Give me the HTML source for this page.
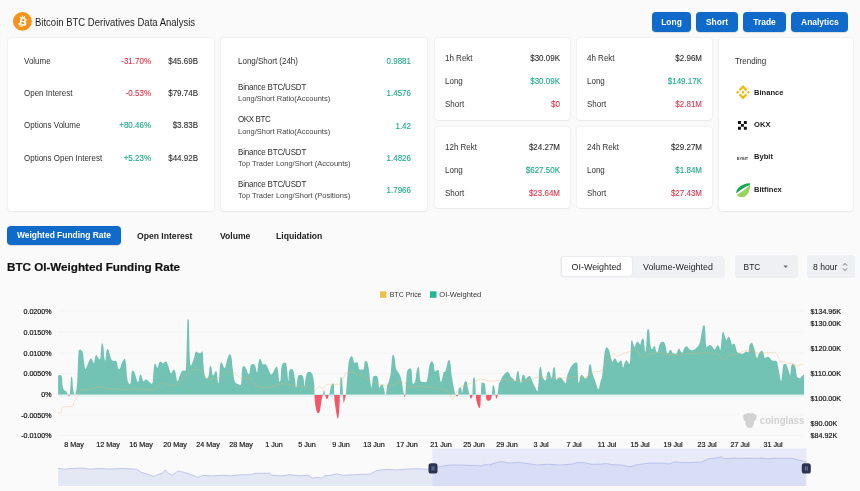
<!DOCTYPE html>
<html>
<head>
<meta charset="utf-8">
<title>Bitcoin BTC Derivatives Data Analysis</title>
<style>
*{box-sizing:border-box;margin:0;padding:0}
html,body{width:860px;height:491px;overflow:hidden;background:#fafafa;font-family:"Liberation Sans",sans-serif;color:#222}
#root{position:relative;width:860px;height:491px;overflow:hidden;will-change:transform;-webkit-font-smoothing:antialiased}
.abs{position:absolute;white-space:nowrap}
.card{position:absolute;background:#fff;border-radius:3px;box-shadow:0 0 2.5px rgba(0,0,0,0.10),0 1px 1.5px rgba(0,0,0,0.04)}
.t{position:absolute;white-space:nowrap;font-size:8.6px;line-height:10px;color:#303030;transform:scaleX(0.93);transform-origin:0 0;margin-top:-0.3px}
.r{text-align:right;transform-origin:100% 0;-webkit-text-stroke:0.12px currentColor}
.red{color:#e0364f}
.grn{color:#1fa88a}
.sub{font-size:8px;color:#444;transform:scaleX(0.9375)}
.bn{letter-spacing:-0.2px}
.tn{font-weight:bold;font-size:8.1px;color:#222;transform:scaleX(0.938)}
.btn{position:absolute;background:#0f6aca;color:#fff;font-weight:bold;font-size:8.45px;line-height:20px;height:20px;border-radius:4px;text-align:center;box-shadow:0 0.5px 1px rgba(0,0,0,0.12)}
.tab{position:absolute;font-weight:bold;font-size:8.6px;line-height:20px;color:#222;white-space:nowrap}
.ctl{font-size:8.4px;line-height:11px;color:#222}
</style>
</head>
<body>
<div id="root">

<!-- header -->
<svg class="abs" style="left:13.1px;top:12.4px" width="18.8" height="18.8" viewBox="0 0 32 32"><circle cx="16" cy="16" r="16" fill="#f7931a"/><path fill="#fff" d="M23.189 14.02c.314-2.096-1.283-3.223-3.465-3.975l.708-2.84-1.728-.43-.69 2.765c-.454-.114-.92-.22-1.385-.326l.695-2.783L15.596 6l-.708 2.839c-.376-.086-.746-.17-1.104-.26l.002-.009-2.384-.595-.46 1.846s1.283.294 1.256.312c.7.175.826.638.805 1.006l-.806 3.235c.048.012.11.03.18.057l-.183-.045-1.13 4.532c-.086.212-.303.531-.793.41.018.025-1.256-.313-1.256-.313l-.858 1.978 2.25.561c.418.105.828.215 1.231.318l-.715 2.872 1.727.43.708-2.84c.472.127.93.245 1.378.357l-.706 2.828 1.728.43.715-2.866c2.948.558 5.164.333 6.097-2.333.752-2.146-.037-3.385-1.588-4.192 1.13-.26 1.98-1.003 2.207-2.538zm-3.95 5.538c-.533 2.147-4.148.986-5.32.695l.95-3.805c1.172.293 4.929.872 4.37 3.11zm.535-5.569c-.487 1.953-3.495.96-4.47.717l.86-3.45c.975.243 4.118.696 3.61 2.733z"/></svg>
<div class="abs" id="title" style="left:35px;top:16.6px;font-size:10.4px;line-height:12px;color:#1e1e1e;transform:scaleX(0.915);transform-origin:0 0">Bitcoin BTC Derivatives Data Analysis</div>

<div class="btn" style="left:652px;top:12px;width:39px">Long</div>
<div class="btn" style="left:696px;top:12px;width:42px">Short</div>
<div class="btn" style="left:743px;top:12px;width:43px">Trade</div>
<div class="btn" style="left:791.2px;top:12px;width:57.3px">Analytics</div>

<!-- card 1 -->
<div class="card" style="left:8px;top:37.5px;width:206px;height:173.5px"></div>
<div class="t" style="left:24px;top:56px">Volume</div>
<div class="t r red" style="left:100px;width:51px;top:56px">-31.70%</div>
<div class="t r" style="left:149.5px;width:48px;top:56px">$45.69B</div>
<div class="t" style="left:24px;top:88.5px">Open Interest</div>
<div class="t r red" style="left:100px;width:51px;top:88.5px">-0.53%</div>
<div class="t r" style="left:149.5px;width:48px;top:88.5px">$79.74B</div>
<div class="t" style="left:24px;top:120.5px">Options Volume</div>
<div class="t r grn" style="left:100px;width:51px;top:120.5px">+80.46%</div>
<div class="t r" style="left:149.5px;width:48px;top:120.5px">$3.83B</div>
<div class="t" style="left:24px;top:153px">Options Open Interest</div>
<div class="t r grn" style="left:100px;width:51px;top:153px">+5.23%</div>
<div class="t r" style="left:149.5px;width:48px;top:153px">$44.92B</div>

<!-- card 2 -->
<div class="card" style="left:221px;top:37.5px;width:206.3px;height:173.5px"></div>
<div class="t" style="left:237.5px;top:56px">Long/Short (24h)</div>
<div class="t r grn" style="left:360px;width:51px;top:56px">0.9881</div>
<div class="t bn" style="left:237.5px;top:82px">Binance BTC/USDT</div>
<div class="t sub" style="left:237.5px;top:94.7px">Long/Short Ratio(Accounts)</div>
<div class="t r grn" style="left:360px;width:51px;top:88.7px">1.4576</div>
<div class="t bn" style="left:237.5px;top:114.7px;letter-spacing:-0.4px">OKX BTC</div>
<div class="t sub" style="left:237.5px;top:127.5px">Long/Short Ratio(Accounts)</div>
<div class="t r grn" style="left:360px;width:51px;top:121px">1.42</div>
<div class="t bn" style="left:237.5px;top:147px">Binance BTC/USDT</div>
<div class="t sub" style="left:237.5px;top:159.7px">Top Trader Long/Short (Accounts)</div>
<div class="t r grn" style="left:360px;width:51px;top:153.7px">1.4826</div>
<div class="t bn" style="left:237.5px;top:179.5px">Binance BTC/USDT</div>
<div class="t sub" style="left:237.5px;top:191.7px">Top Trader Long/Short (Positions)</div>
<div class="t r grn" style="left:360px;width:51px;top:185.7px">1.7966</div>

<!-- rekt cards -->
<div class="card" style="left:435px;top:38px;width:135px;height:81.5px"></div>
<div class="t" style="left:445px;top:53px">1h Rekt</div><div class="t r" style="left:500px;width:60px;top:53px">$30.09K</div>
<div class="t" style="left:445px;top:76px">Long</div><div class="t r grn" style="left:500px;width:60px;top:76px">$30.09K</div>
<div class="t" style="left:445px;top:99px">Short</div><div class="t r red" style="left:500px;width:60px;top:99px">$0</div>

<div class="card" style="left:435px;top:127px;width:135px;height:81px"></div>
<div class="t" style="left:445px;top:142px">12h Rekt</div><div class="t r" style="left:500px;width:60px;top:142px">$24.27M</div>
<div class="t" style="left:445px;top:165px">Long</div><div class="t r grn" style="left:500px;width:60px;top:165px">$627.50K</div>
<div class="t" style="left:445px;top:188px">Short</div><div class="t r red" style="left:500px;width:60px;top:188px">$23.64M</div>

<div class="card" style="left:577px;top:38px;width:135px;height:81.5px"></div>
<div class="t" style="left:587px;top:53px">4h Rekt</div><div class="t r" style="left:642px;width:60px;top:53px">$2.96M</div>
<div class="t" style="left:587px;top:76px">Long</div><div class="t r grn" style="left:642px;width:60px;top:76px">$149.17K</div>
<div class="t" style="left:587px;top:99px">Short</div><div class="t r red" style="left:642px;width:60px;top:99px">$2.81M</div>

<div class="card" style="left:577px;top:127px;width:135px;height:81px"></div>
<div class="t" style="left:587px;top:142px">24h Rekt</div><div class="t r" style="left:642px;width:60px;top:142px">$29.27M</div>
<div class="t" style="left:587px;top:165px">Long</div><div class="t r grn" style="left:642px;width:60px;top:165px">$1.84M</div>
<div class="t" style="left:587px;top:188px">Short</div><div class="t r red" style="left:642px;width:60px;top:188px">$27.43M</div>

<!-- trending -->
<div class="card" style="left:719px;top:37.5px;width:134px;height:173.5px"></div>
<div class="t" style="left:735px;top:56px">Trending</div>
<div class="t tn" style="left:753.9px;top:88.6px">Binance</div>
<div class="t tn" style="left:753.9px;top:120.6px">OKX</div>
<div class="t tn" style="left:753.9px;top:152.7px">Bybit</div>
<div class="t tn" style="left:753.9px;top:185.4px">Bitfinex</div>
<svg class="abs" style="left:735.8px;top:85.4px" width="14" height="14.6" viewBox="0 0 126.61 126.61" preserveAspectRatio="none"><path fill="#f0b90b" d="M38.73 53.2l24.59-24.58 24.6 24.6 14.3-14.31L63.32 0 24.42 38.9zM0 63.31l14.3-14.31 14.31 14.31-14.31 14.3zM38.73 73.41l24.59 24.59 24.6-24.6 14.31 14.29-38.9 38.91-38.91-38.88zM98 63.31l14.3-14.31 14.31 14.3-14.31 14.32zM77.83 63.3L63.32 48.78 52.59 59.51l-1.24 1.23-2.54 2.54 14.51 14.5 14.51-14.47z"/></svg>
<svg class="abs" style="left:738.4px;top:121px" width="8.8" height="8.8" viewBox="0 0 3 3"><path fill="#111" d="M0 0h1v1h-1zM2 0h1v1h-1zM1 1h1v1h-1zM0 2h1v1h-1zM2 2h1v1h-1z"/></svg>
<svg class="abs" style="left:736px;top:154px" width="13" height="8" viewBox="0 0 13 8"><text x="0.7" y="5.9" font-family="Liberation Sans, sans-serif" font-weight="bold" font-size="4.4" fill="#444" textLength="11.5" lengthAdjust="spacingAndGlyphs">BYBIT</text></svg>
<svg class="abs" style="left:735.8px;top:182.6px" width="14.4" height="14.6" viewBox="0 0 153 155"><path fill="#16a84f" d="M3 100 C8 55 55 8 150 3 C150 10 148 18 146 22 C100 40 45 75 6 108 C3 106 3 103 3 100z"/><path fill="#97d45c" d="M8 128 C50 100 105 70 150 18 C152 60 140 110 100 140 C70 158 25 150 8 128z"/></svg>

<!-- tabs -->
<div class="btn" style="left:7px;top:226px;width:114px;height:19.3px;line-height:19.3px">Weighted Funding Rate</div>
<div class="tab" style="left:137px;top:226px">Open Interest</div>
<div class="tab" style="left:220px;top:226px">Volume</div>
<div class="tab" style="left:276px;top:226px">Liquidation</div>

<div class="abs" id="h2" style="left:7px;top:259.7px;font-size:11.65px;line-height:14px;font-weight:bold;color:#111;-webkit-text-stroke:0.2px #111">BTC OI-Weighted Funding Rate</div>

<!--CHART-->
<svg class="abs" style="left:0;top:0" width="860" height="491" viewBox="0 0 860 491" font-family="Liberation Sans, sans-serif">
<defs><clipPath id="up"><rect x="0" y="300" width="860" height="94.8"/></clipPath><clipPath id="dn"><rect x="0" y="395.00" width="860" height="60"/></clipPath><clipPath id="sel"><rect x="432.2" y="448" width="374.1" height="38"/></clipPath><clipPath id="unsel"><rect x="58" y="448" width="374.2" height="38"/></clipPath></defs>
<line x1="58" x2="804" y1="311.0" y2="311.0" stroke="#f4f4f4" stroke-width="1"/>
<line x1="58" x2="804" y1="332.0" y2="332.0" stroke="#f4f4f4" stroke-width="1"/>
<line x1="58" x2="804" y1="353.0" y2="353.0" stroke="#f4f4f4" stroke-width="1"/>
<line x1="58" x2="804" y1="373.5" y2="373.5" stroke="#f4f4f4" stroke-width="1"/>
<line x1="58" x2="804" y1="394.5" y2="394.5" stroke="#f4f4f4" stroke-width="1"/>
<line x1="58" x2="804" y1="415.0" y2="415.0" stroke="#f4f4f4" stroke-width="1"/>
<line x1="58" x2="804" y1="435.5" y2="435.5" stroke="#f4f4f4" stroke-width="1"/>
<rect x="380" y="291.3" width="6.5" height="6.5" fill="#e9c04c"/><text x="389.8" y="297.3" font-size="7.6" fill="#333" textLength="31.7" lengthAdjust="spacingAndGlyphs">BTC Price</text>
<rect x="430" y="291.3" width="6.5" height="6.5" fill="#22b88f"/><text x="439.3" y="297.3" font-size="7.6" fill="#333" textLength="42" lengthAdjust="spacingAndGlyphs">OI-Weighted</text>
<line x1="58" x2="804" y1="396" y2="396" stroke="#e6f6f5" stroke-width="2"/>
<path d="M58.1 394.8 L58.1 375.4 C58.7 375.5 60.7 374.1 61.6 376.0 C62.4 377.8 62.2 383.1 62.6 385.6 C63.1 388.1 63.4 389.0 64.0 390.0 C64.6 391.0 65.5 390.6 66.1 391.2 C66.8 391.8 67.1 392.9 67.5 393.5 C67.9 394.1 68.0 394.2 68.2 394.7 C68.5 395.2 68.7 396.5 68.9 396.5 C69.2 396.5 69.4 396.0 69.6 394.7 C69.9 393.4 70.1 392.2 70.3 389.1 C70.6 386.0 70.7 379.7 71.0 377.7 C71.4 375.8 71.9 376.2 72.3 378.2 C72.6 380.3 72.8 386.2 73.1 389.1 C73.5 392.0 73.7 393.5 74.2 394.4 C74.6 395.2 75.0 396.2 75.6 394.0 C76.1 391.8 76.7 389.3 77.2 382.1 C77.7 374.9 77.9 359.9 78.4 354.1 C78.9 348.2 79.2 350.3 79.8 349.7 C80.4 349.0 81.0 349.9 81.5 350.6 C82.1 351.2 82.5 351.0 82.9 353.2 C83.4 355.4 83.7 360.0 84.2 362.8 C84.6 365.7 84.8 368.6 85.4 369.0 C86.0 369.3 86.9 366.3 87.7 364.6 C88.5 362.8 89.2 360.3 90.0 359.3 C90.7 358.3 91.1 358.5 91.7 359.0 C92.3 359.4 92.7 361.2 93.1 361.9 C93.5 362.6 93.8 363.8 94.2 362.8 C94.5 361.9 94.8 358.1 95.2 356.7 C95.6 355.3 96.0 354.9 96.4 354.9 C96.9 354.9 97.2 355.9 97.7 356.7 C98.1 357.5 98.6 359.2 99.1 359.3 C99.6 359.5 100.1 359.8 100.5 357.6 C100.8 355.4 100.9 349.6 101.2 347.0 C101.5 344.5 101.8 343.2 102.2 343.2 C102.6 343.2 103.1 344.5 103.4 347.0 C103.8 349.6 104.0 355.2 104.3 357.6 C104.7 359.9 105.0 361.3 105.4 360.2 C105.8 359.1 106.0 353.4 106.4 351.4 C106.9 349.4 107.3 349.0 107.8 349.1 C108.3 349.3 108.7 350.6 109.2 352.3 C109.8 354.0 110.3 356.9 111.0 358.4 C111.7 360.0 112.1 360.2 113.1 360.7 C114.1 361.3 115.7 360.1 116.6 361.4 C117.5 362.7 117.4 366.7 118.0 368.1 C118.6 369.4 119.1 369.7 119.7 369.0 C120.4 368.2 120.9 365.3 121.5 363.7 C122.1 362.1 122.6 361.0 123.2 360.2 C123.9 359.3 124.5 358.2 125.0 359.0 C125.5 359.8 125.7 361.2 126.1 364.6 C126.4 367.9 126.6 374.3 127.1 377.7 C127.6 381.1 128.2 382.5 128.9 383.5 C129.5 384.4 130.1 385.0 130.6 383.0 C131.1 381.0 131.2 374.7 131.7 372.5 C132.1 370.2 132.5 370.5 133.1 370.7 C133.6 370.9 134.1 371.6 134.8 373.3 C135.5 375.1 136.3 378.8 136.9 380.3 C137.5 381.9 137.9 382.7 138.3 382.1 C138.8 381.5 138.9 378.3 139.4 376.8 C139.8 375.4 140.3 374.2 140.8 374.2 C141.2 374.2 141.4 375.6 141.8 376.8 C142.3 378.1 142.6 380.7 143.2 381.2 C143.9 381.7 144.8 379.7 145.5 379.5 C146.2 379.2 146.5 379.5 147.3 380.0 C148.0 380.5 148.9 381.9 149.9 382.4 C150.8 383.0 151.9 384.6 152.5 383.0 C153.1 381.3 153.0 376.7 153.4 373.3 C153.7 370.0 154.0 365.8 154.4 364.2 C154.9 362.6 155.3 363.9 155.8 364.6 C156.3 365.3 156.7 368.1 157.2 368.1 C157.7 368.1 158.1 365.7 158.6 364.6 C159.1 363.4 159.5 362.1 160.0 361.6 C160.6 361.1 160.9 361.7 161.4 361.9 C162.0 362.2 162.4 363.2 163.0 363.2 C163.6 363.2 164.2 362.2 164.8 361.9 C165.4 361.7 165.8 361.1 166.4 361.6 C166.9 362.1 167.3 363.2 167.8 364.6 C168.3 365.9 168.6 367.4 169.2 369.0 C169.7 370.5 170.3 373.0 170.9 373.3 C171.5 373.6 172.1 371.4 172.7 370.7 C173.2 370.0 173.6 369.2 174.1 369.5 C174.6 369.8 175.0 370.5 175.5 372.5 C176.0 374.4 176.4 378.9 176.9 380.3 C177.4 381.8 177.8 381.1 178.3 380.3 C178.8 379.6 179.0 377.5 179.7 376.0 C180.3 374.4 181.0 372.6 181.8 371.6 C182.5 370.5 183.2 370.7 183.9 370.2 C184.6 369.7 185.3 373.1 185.8 369.0 C186.3 364.8 186.4 355.4 186.7 347.0 C187.0 338.7 187.1 327.4 187.4 322.5 C187.6 317.6 187.8 319.9 188.1 319.9 C188.4 319.9 188.7 316.0 189.0 322.5 C189.2 329.0 189.3 348.1 189.7 355.8 C190.0 363.5 190.2 364.2 190.7 365.4 C191.2 366.7 191.8 363.9 192.3 362.8 C192.8 361.7 193.2 361.0 193.7 359.3 C194.2 357.6 194.6 354.6 195.1 353.2 C195.6 351.8 196.0 351.5 196.5 351.4 C197.0 351.3 197.4 352.3 198.1 352.7 C198.7 353.0 199.4 353.2 200.0 353.2 C200.6 353.1 200.9 352.4 201.4 352.3 C201.9 352.2 202.4 349.5 202.8 352.7 C203.2 355.8 203.4 365.5 203.9 369.8 C204.3 374.2 204.7 375.3 205.3 376.8 C205.8 378.4 206.4 378.9 207.0 378.6 C207.6 378.3 208.3 377.1 208.8 375.1 C209.2 373.0 209.3 368.8 209.6 367.2 C210.0 365.6 210.2 365.8 210.5 366.0 C210.9 366.1 211.2 366.4 211.6 368.1 C211.9 369.7 212.2 374.0 212.6 375.1 C213.1 376.2 213.5 374.8 214.0 374.2 C214.5 373.6 214.9 371.9 215.4 371.6 C215.9 371.3 216.4 370.6 216.8 372.5 C217.3 374.3 217.5 380.5 217.9 382.1 C218.3 383.7 218.5 384.4 218.9 381.2 C219.3 378.1 219.7 367.9 220.2 364.6 C220.6 361.2 220.9 362.5 221.4 362.5 C221.9 362.5 222.3 363.6 222.8 364.6 C223.3 365.6 223.7 367.8 224.2 368.1 C224.7 368.4 225.0 367.9 225.6 366.3 C226.1 364.7 226.6 361.4 227.2 359.3 C227.8 357.3 228.4 355.8 228.9 354.9 C229.4 354.0 229.7 353.9 230.1 354.4 C230.6 354.9 231.1 355.1 231.5 357.6 C232.0 360.0 232.1 364.1 232.6 368.1 C233.1 372.0 233.6 376.8 234.2 379.5 C234.8 382.1 235.1 382.1 235.9 383.0 C236.7 383.8 237.6 384.0 238.6 384.2 C239.5 384.4 240.5 386.4 241.2 383.8 C241.8 381.3 241.6 373.0 242.1 369.8 C242.5 366.6 243.0 366.5 243.5 366.0 C244.0 365.4 244.3 366.0 244.9 366.7 C245.4 367.4 246.0 368.5 246.6 369.8 C247.2 371.2 247.8 373.7 248.4 374.2 C248.9 374.7 249.4 373.9 249.8 372.5 C250.1 371.0 250.1 367.5 250.5 366.0 C250.8 364.5 251.3 364.5 251.9 364.2 C252.4 363.9 253.0 363.8 253.6 364.2 C254.3 364.6 254.7 364.8 255.4 366.3 C256.0 367.8 256.6 372.8 257.1 372.5 C257.6 372.1 257.8 366.9 258.2 364.6 C258.6 362.3 258.8 360.7 259.2 359.7 C259.7 358.7 260.1 358.4 260.6 359.0 C261.1 359.5 261.5 361.8 262.0 362.8 C262.5 363.8 262.8 364.3 263.4 364.6 C264.1 364.8 264.8 363.7 265.5 364.2 C266.3 364.7 266.8 365.6 267.6 367.2 C268.5 368.8 269.3 372.1 270.1 373.3 C270.9 374.6 271.2 374.5 271.8 374.2 C272.5 373.9 273.0 372.7 273.6 371.6 C274.2 370.4 274.7 368.5 275.4 367.7 C276.0 366.9 276.6 366.5 277.1 367.2 C277.6 367.9 277.8 369.1 278.2 371.6 C278.5 374.1 278.8 379.8 279.2 381.2 C279.6 382.6 280.2 381.8 280.6 379.5 C281.0 377.1 280.9 370.9 281.3 368.1 C281.7 365.2 282.1 364.6 282.7 363.7 C283.3 362.7 283.8 362.8 284.5 362.8 C285.1 362.8 285.7 362.1 286.2 363.7 C286.7 365.3 286.9 368.4 287.3 371.6 C287.6 374.7 288.0 381.1 288.3 381.2 C288.6 381.4 288.7 374.6 289.0 372.5 C289.3 370.3 289.6 370.1 290.1 369.5 C290.6 368.9 291.2 368.7 291.8 369.1 C292.5 369.5 293.0 369.7 293.6 371.6 C294.1 373.4 294.5 376.6 295.0 379.5 C295.4 382.4 295.6 387.2 296.0 387.7 C296.4 388.2 296.7 384.2 297.1 382.1 C297.5 380.0 297.6 377.2 298.1 376.0 C298.6 374.7 299.1 375.2 299.9 375.1 C300.6 375.0 301.6 374.6 302.3 375.4 C303.0 376.2 303.4 377.5 303.7 379.5 C304.1 381.5 304.1 386.5 304.4 386.5 C304.8 386.5 305.0 381.8 305.5 379.5 C305.9 377.1 306.3 374.7 306.9 373.3 C307.5 372.0 308.2 372.3 309.0 372.1 C309.8 371.9 310.4 371.8 311.1 372.5 C311.8 373.1 312.3 373.6 312.9 376.0 C313.4 378.3 314.0 382.2 314.3 385.6 C314.5 389.0 314.4 392.0 314.5 394.8 C314.6 397.6 314.7 399.1 314.9 401.3 C315.1 403.5 315.3 405.2 315.6 407.0 C316.0 408.8 316.3 410.2 316.6 411.2 C317.0 412.3 317.2 412.4 317.5 412.8 C317.8 413.2 318.0 413.3 318.3 413.3 C318.6 413.2 318.9 413.2 319.2 412.5 C319.6 411.9 319.8 411.5 320.2 409.4 C320.6 407.4 321.0 403.5 321.4 401.3 C321.7 399.1 321.9 398.4 322.2 397.2 C322.4 396.1 322.6 395.8 322.8 394.8 C323.1 393.8 323.2 392.4 323.5 391.5 C323.7 390.6 323.8 389.8 324.0 389.9 C324.2 390.0 324.4 391.0 324.6 391.9 C324.8 392.8 324.8 393.7 325.1 394.8 C325.4 395.9 325.8 397.3 326.1 398.0 C326.4 398.8 326.6 399.0 326.9 399.0 C327.2 399.0 327.5 398.8 327.9 398.0 C328.2 397.3 328.4 395.4 328.7 394.8 C328.9 394.2 329.0 396.0 329.3 394.7 C329.7 393.4 330.2 389.3 330.7 387.4 C331.3 385.4 331.9 384.3 332.5 383.8 C333.0 383.4 333.6 382.8 333.9 384.7 C334.2 386.7 334.1 391.7 334.2 394.7 C334.4 397.7 334.3 398.1 334.6 401.3 C335.0 404.5 335.7 409.6 336.3 412.7 C336.8 415.8 337.3 417.7 337.6 418.4 C338.0 419.1 338.1 419.1 338.5 416.8 C338.8 414.4 339.3 409.3 339.5 405.4 C339.8 401.4 339.7 399.6 339.9 394.8 C340.1 390.0 340.2 381.7 340.5 378.6 C340.8 375.5 341.3 377.1 341.6 377.7 C341.9 378.3 342.0 379.0 342.3 382.1 C342.5 385.2 342.8 391.0 343.0 394.7 C343.2 398.4 343.3 401.9 343.6 402.8 C343.9 403.7 344.3 401.1 344.7 399.7 C345.1 398.2 345.3 398.6 345.8 394.8 C346.3 391.0 346.7 384.3 347.2 378.6 C347.7 372.8 348.1 366.5 348.6 362.8 C349.1 359.1 349.5 359.1 350.0 357.9 C350.5 356.7 350.9 356.2 351.4 356.2 C351.9 356.1 352.3 356.4 352.8 357.6 C353.3 358.8 353.6 361.9 354.2 362.8 C354.8 363.7 355.3 362.5 356.0 362.5 C356.6 362.5 357.1 361.7 357.7 362.8 C358.3 364.0 358.4 367.8 359.1 369.0 C359.8 370.1 360.7 369.5 361.6 369.5 C362.4 369.5 363.1 370.3 363.7 369.0 C364.2 367.6 364.3 363.4 364.7 361.9 C365.2 360.5 365.6 360.9 366.1 361.1 C366.6 361.2 367.0 361.2 367.5 362.8 C368.0 364.4 368.4 366.4 368.9 369.8 C369.4 373.3 369.8 378.9 370.3 382.1 C370.8 385.2 371.3 388.1 371.7 387.4 C372.2 386.6 372.3 379.7 372.8 377.7 C373.3 375.7 373.8 376.4 374.5 376.1 C375.2 375.9 376.0 375.7 376.6 376.1 C377.3 376.6 377.6 376.6 378.0 378.6 C378.5 380.6 378.6 386.2 379.1 387.4 C379.6 388.5 380.2 385.7 380.8 385.2 C381.5 384.8 382.0 384.0 382.6 384.7 C383.2 385.4 383.6 387.4 384.0 389.1 C384.4 390.8 384.7 393.4 385.0 394.4 C385.4 395.3 385.7 395.9 386.1 394.4 C386.5 392.8 386.6 388.0 387.1 385.6 C387.7 383.2 388.3 383.4 388.9 381.2 C389.5 379.0 390.1 377.6 390.7 373.3 C391.2 369.1 391.6 360.9 392.1 357.6 C392.6 354.2 393.0 354.9 393.5 354.9 C393.9 354.9 394.1 355.2 394.5 357.6 C395.0 359.9 395.3 365.6 395.9 368.1 C396.5 370.6 397.0 370.3 397.7 371.6 C398.4 372.8 399.1 373.5 399.8 375.1 C400.5 376.7 401.0 377.8 401.5 380.3 C402.1 382.9 402.5 386.5 402.9 389.1 C403.4 391.7 403.7 393.3 404.0 394.7 C404.3 396.2 404.4 397.2 404.7 397.2 C404.9 397.2 405.1 397.4 405.4 394.7 C405.6 392.0 405.8 386.3 406.1 382.1 C406.4 377.9 406.6 373.9 407.1 371.6 C407.6 369.2 408.2 369.5 408.9 369.0 C409.5 368.4 410.1 368.0 410.6 368.4 C411.1 368.9 411.4 369.1 411.7 371.6 C412.0 374.0 412.1 379.9 412.4 382.1 C412.7 384.3 412.9 384.0 413.4 383.8 C413.9 383.7 414.6 383.4 415.2 381.2 C415.8 379.0 416.1 374.1 416.6 371.6 C417.1 369.1 417.5 367.8 418.0 367.2 C418.4 366.6 418.7 365.9 419.0 368.1 C419.4 370.3 419.7 377.0 420.1 379.5 C420.5 381.9 420.9 381.3 421.5 381.7 C422.1 382.2 422.7 382.1 423.6 382.1 C424.5 382.1 425.6 382.7 426.4 381.7 C427.2 380.8 427.3 379.6 427.8 376.8 C428.3 374.1 428.6 369.0 429.2 366.3 C429.8 363.6 430.4 362.8 431.0 361.9 C431.5 361.1 431.9 360.9 432.4 361.4 C432.9 361.9 433.3 362.8 433.8 364.6 C434.2 366.3 434.2 370.2 434.8 371.2 C435.4 372.2 436.2 370.3 436.9 370.2 C437.6 370.1 438.2 369.5 438.7 370.7 C439.2 371.9 439.3 374.8 439.7 376.8 C440.1 378.9 440.3 381.8 440.8 382.1 C441.2 382.4 441.7 380.3 442.2 378.6 C442.7 376.9 443.0 373.7 443.6 372.5 C444.1 371.2 444.8 372.7 445.3 371.6 C445.9 370.5 446.2 368.2 446.7 366.3 C447.2 364.4 447.6 362.2 448.1 361.1 C448.6 360.0 449.1 359.6 449.5 360.2 C450.0 360.8 450.2 361.9 450.6 364.6 C451.0 367.3 451.1 371.3 451.6 375.1 C452.1 378.9 452.8 382.4 453.4 385.6 C454.0 388.8 454.4 391.0 454.8 392.6 C455.2 394.2 455.3 394.3 455.5 394.7 C455.7 395.1 455.7 394.5 455.9 394.8 C456.1 395.1 456.4 396.2 456.7 396.4 C457.0 396.6 457.3 396.3 457.5 396.0 C457.8 395.7 457.9 396.0 458.1 394.8 C458.3 393.5 458.3 390.4 458.6 389.1 C459.0 387.8 459.5 387.4 460.0 387.4 C460.6 387.4 461.1 388.1 461.4 389.1 C461.8 390.1 461.7 393.9 462.1 393.0 C462.6 392.0 463.3 386.0 463.9 383.8 C464.5 381.7 464.8 381.5 465.3 381.2 C465.8 380.9 466.2 380.7 466.7 382.1 C467.2 383.5 467.6 386.8 468.1 389.1 C468.6 391.4 469.2 393.7 469.5 394.7 C469.7 395.7 469.6 394.2 469.7 394.8 C469.9 395.4 470.1 397.3 470.3 398.0 C470.6 398.7 470.8 398.8 471.1 398.7 C471.4 398.5 471.7 397.9 471.9 397.2 C472.2 396.5 472.2 397.8 472.4 394.8 C472.6 391.7 472.7 383.5 473.0 380.3 C473.3 377.2 473.7 377.2 474.1 377.2 C474.4 377.2 474.8 377.2 475.1 380.3 C475.4 383.5 475.7 392.1 475.8 394.7 C475.9 397.3 475.8 393.9 475.9 394.8 C475.9 395.7 475.9 397.8 476.3 399.7 C476.6 401.6 477.3 403.9 477.9 405.4 C478.5 406.9 479.1 407.8 479.5 408.0 C480.0 408.1 480.1 408.6 480.3 406.2 C480.6 403.8 480.7 398.8 480.9 394.8 C481.1 390.8 481.0 386.0 481.4 383.8 C481.8 381.7 482.5 382.9 483.2 383.0 C483.8 383.0 484.4 382.1 484.9 384.2 C485.4 386.3 485.8 392.8 486.0 394.7 C486.0 396.6 486.0 394.0 486.0 394.8 C486.1 395.5 486.0 397.8 486.3 398.9 C486.6 399.9 487.1 400.4 487.7 400.6 C488.3 400.9 489.0 400.9 489.7 400.5 C490.4 400.1 491.0 399.5 491.3 398.4 C491.7 397.4 491.6 396.9 491.8 394.8 C492.1 392.6 492.3 388.1 492.6 386.5 C493.0 384.8 493.3 385.1 493.7 385.6 C494.1 386.1 494.4 387.5 494.7 389.1 C495.1 390.7 495.2 393.0 495.4 394.7 C495.7 396.5 495.9 398.5 496.2 398.9 C496.5 399.2 496.9 397.5 497.2 396.8 C497.5 396.1 497.4 397.1 497.7 394.8 C498.0 392.4 498.5 386.1 498.9 383.8 C499.4 381.6 499.5 383.2 500.0 382.1 C500.5 381.0 501.1 379.0 501.8 377.7 C502.4 376.4 503.1 375.7 503.9 374.7 C504.6 373.8 505.3 373.0 506.0 372.5 C506.7 372.0 507.1 371.8 507.7 371.9 C508.3 372.1 508.5 372.4 509.1 373.3 C509.7 374.2 510.1 375.8 510.9 376.8 C511.6 377.8 512.5 378.2 513.3 378.9 C514.1 379.7 514.9 381.9 515.4 381.2 C516.0 380.5 516.1 376.9 516.5 375.1 C516.9 373.3 517.1 371.9 517.5 371.2 C517.9 370.6 518.2 370.3 518.6 371.6 C519.0 372.9 519.2 376.5 519.6 378.6 C520.1 380.6 520.6 383.3 521.0 383.0 C521.5 382.7 521.7 378.3 522.1 376.8 C522.5 375.4 522.7 375.3 523.1 375.1 C523.6 374.8 524.0 374.7 524.5 375.4 C525.0 376.1 525.4 378.6 525.9 378.9 C526.4 379.3 526.8 377.7 527.3 377.2 C527.9 376.7 528.5 376.2 529.1 376.1 C529.7 376.1 530.0 376.1 530.5 376.8 C531.0 377.6 531.3 379.0 531.9 380.3 C532.5 381.7 533.0 382.8 533.6 384.2 C534.3 385.6 535.1 387.0 535.7 388.2 C536.4 389.5 537.0 392.3 537.5 391.2 C538.0 390.1 538.2 385.9 538.6 382.1 C538.9 378.2 538.9 372.5 539.3 369.8 C539.6 367.1 539.9 367.2 540.3 367.0 C540.7 366.9 541.0 367.3 541.4 369.0 C541.7 370.6 541.9 374.1 542.4 376.0 C542.9 377.9 543.5 378.7 544.2 379.5 C544.8 380.2 545.4 380.9 545.9 380.0 C546.4 379.0 546.5 375.7 547.0 374.2 C547.4 372.7 547.9 371.9 548.4 371.6 C548.9 371.3 549.3 371.4 549.8 372.5 C550.3 373.6 550.7 376.9 551.2 377.7 C551.6 378.5 551.9 378.3 552.2 376.8 C552.5 375.4 552.6 371.6 552.9 369.8 C553.2 368.1 553.6 367.4 554.0 367.2 C554.4 367.0 554.6 366.7 555.0 369.0 C555.4 371.2 555.6 377.8 556.1 379.5 C556.6 381.1 557.1 378.6 557.8 378.2 C558.5 377.9 559.2 377.5 559.9 377.5 C560.6 377.6 561.0 377.9 561.7 378.6 C562.4 379.3 563.0 380.4 563.8 381.2 C564.5 382.0 565.3 383.8 565.9 383.0 C566.5 382.2 566.4 378.9 566.9 376.8 C567.4 374.8 568.0 373.3 568.7 371.6 C569.4 369.8 570.0 368.5 570.8 367.2 C571.6 365.9 572.1 365.0 572.9 364.2 C573.7 363.4 574.4 363.1 575.0 362.8 C575.6 362.5 576.0 362.2 576.4 362.5 C576.8 362.8 577.1 361.2 577.5 364.6 C577.8 367.9 577.8 378.1 578.2 381.2 C578.5 384.4 578.8 382.9 579.2 382.1 C579.6 381.3 579.8 378.2 580.3 376.8 C580.7 375.5 581.2 374.9 581.7 374.7 C582.2 374.6 582.5 375.3 583.1 376.0 C583.6 376.6 584.2 377.9 584.8 378.2 C585.4 378.6 586.0 378.5 586.6 377.9 C587.1 377.3 587.5 377.2 588.0 375.1 C588.4 373.0 588.6 368.3 589.0 366.3 C589.4 364.4 589.7 364.4 590.1 364.2 C590.4 364.1 590.7 364.0 591.1 365.4 C591.5 366.9 591.7 370.4 592.2 372.5 C592.6 374.5 593.0 375.3 593.6 376.8 C594.1 378.4 594.8 379.6 595.3 381.2 C595.9 382.8 596.2 384.1 596.7 385.6 C597.2 387.1 597.7 389.1 598.1 389.5 C598.6 389.8 598.7 388.8 599.2 387.4 C599.6 385.9 600.1 383.1 600.6 381.2 C601.1 379.3 601.5 379.8 602.0 376.8 C602.5 373.8 602.9 368.7 603.4 364.6 C603.8 360.5 604.1 356.9 604.4 354.1 C604.8 351.2 605.0 350.0 605.5 348.8 C605.9 347.6 606.4 347.6 606.9 347.6 C607.4 347.6 607.8 347.9 608.3 348.8 C608.8 349.7 609.2 350.6 609.7 352.3 C610.2 354.0 610.6 356.7 611.1 358.4 C611.6 360.2 612.0 361.8 612.5 361.9 C613.0 362.1 613.4 359.9 613.9 359.3 C614.4 358.7 614.8 358.3 615.3 358.6 C615.8 358.9 616.3 360.3 616.7 361.1 C617.1 361.8 617.3 362.7 617.8 362.8 C618.2 363.0 618.7 362.4 619.2 361.9 C619.7 361.5 620.1 360.4 620.6 360.4 C621.1 360.4 621.5 360.6 622.0 361.9 C622.4 363.3 622.6 367.3 623.0 367.7 C623.4 368.2 623.6 365.8 624.1 364.6 C624.5 363.4 625.0 361.8 625.5 361.1 C626.0 360.3 626.4 360.0 626.9 360.4 C627.4 360.7 627.8 362.2 628.3 362.8 C628.8 363.4 629.3 364.6 629.7 363.7 C630.1 362.7 630.1 361.3 630.4 357.6 C630.6 353.8 630.8 345.8 631.1 342.7 C631.4 339.6 631.7 340.2 632.1 340.4 C632.5 340.5 632.7 342.3 633.2 343.5 C633.6 344.7 634.1 347.0 634.6 347.0 C635.1 347.0 635.5 344.5 636.0 343.5 C636.5 342.6 636.9 341.9 637.4 341.8 C637.9 341.6 638.3 342.2 638.8 342.7 C639.3 343.1 639.7 344.9 640.2 344.4 C640.7 343.9 641.1 341.1 641.6 340.0 C642.1 339.0 642.5 338.5 643.0 338.6 C643.4 338.8 643.7 338.6 644.0 340.9 C644.4 343.2 644.7 350.3 645.1 351.4 C645.5 352.5 645.8 350.7 646.1 347.0 C646.5 343.4 646.8 334.5 647.2 331.3 C647.6 328.1 647.9 329.2 648.2 329.2 C648.6 329.2 649.0 329.2 649.3 331.3 C649.6 333.4 649.7 337.9 650.0 340.9 C650.3 343.9 650.6 346.5 651.1 347.9 C651.5 349.3 652.0 349.0 652.5 348.8 C652.9 348.6 653.1 347.1 653.5 346.7 C653.9 346.3 654.4 345.5 654.9 346.3 C655.4 347.2 655.8 350.4 656.3 351.4 C656.8 352.4 657.3 352.7 657.7 352.0 C658.2 351.2 658.3 348.6 658.8 347.0 C659.2 345.5 659.6 344.1 660.2 343.2 C660.7 342.2 661.3 342.0 661.9 341.8 C662.5 341.6 663.0 341.5 663.7 342.1 C664.3 342.8 664.9 343.5 665.4 345.3 C666.0 347.1 666.3 350.9 666.8 352.3 C667.3 353.7 667.7 353.5 668.2 353.2 C668.7 352.9 669.1 351.2 669.6 350.6 C670.1 350.0 670.5 349.5 671.0 349.9 C671.5 350.2 671.8 352.0 672.4 352.7 C673.1 353.3 673.8 353.6 674.5 353.7 C675.3 353.8 676.0 353.9 676.6 353.2 C677.3 352.5 677.5 350.5 678.0 349.7 C678.5 348.9 678.9 348.5 679.4 348.8 C679.9 349.1 680.3 350.8 680.8 351.4 C681.4 352.1 682.0 352.8 682.6 352.3 C683.2 351.8 683.4 349.8 684.0 348.8 C684.6 347.8 685.2 347.1 685.7 346.7 C686.3 346.3 686.6 346.0 687.1 346.3 C687.7 346.7 688.1 348.1 688.9 348.8 C689.7 349.5 690.5 350.0 691.4 350.2 C692.2 350.4 692.9 350.1 693.8 349.7 C694.7 349.3 695.4 348.7 696.3 347.9 C697.1 347.1 698.0 346.7 698.7 345.3 C699.5 343.9 699.9 342.6 700.5 340.0 C701.0 337.5 701.4 333.7 701.9 331.3 C702.3 328.8 702.5 327.4 702.9 326.4 C703.3 325.3 703.6 325.1 704.0 325.3 C704.4 325.6 704.6 324.2 705.0 327.8 C705.4 331.4 705.6 342.0 706.1 345.3 C706.6 348.6 707.2 346.2 707.8 346.2 C708.5 346.1 708.9 345.0 709.6 344.9 C710.2 344.8 710.7 345.1 711.3 345.6 C712.0 346.2 712.5 347.2 713.1 347.9 C713.7 348.6 714.3 349.8 714.8 349.7 C715.4 349.5 715.7 347.8 716.2 347.0 C716.7 346.3 717.1 345.8 717.6 345.6 C718.1 345.5 718.5 345.6 719.0 346.3 C719.5 347.1 720.0 350.8 720.4 349.7 C720.9 348.5 721.1 343.1 721.5 340.0 C721.9 337.0 722.2 334.1 722.5 332.7 C722.9 331.3 723.2 331.5 723.6 332.2 C724.0 332.8 724.5 335.1 725.0 336.5 C725.5 338.0 725.9 339.9 726.4 340.0 C726.9 340.2 727.3 338.0 727.8 337.4 C728.3 336.8 728.7 336.4 729.2 336.9 C729.7 337.4 730.1 338.7 730.6 340.0 C731.1 341.4 731.4 343.8 732.0 344.4 C732.6 345.0 733.5 343.2 734.1 343.5 C734.7 343.9 735.0 344.8 735.5 346.2 C736.0 347.6 736.3 350.3 736.9 351.4 C737.5 352.6 737.9 352.2 738.7 352.7 C739.4 353.1 740.2 353.6 741.1 353.7 C742.0 353.8 742.7 353.6 743.6 353.2 C744.5 352.8 745.1 351.6 746.0 351.4 C746.9 351.2 747.9 353.1 748.5 352.0 C749.1 350.8 749.1 346.9 749.5 345.3 C750.0 343.7 750.4 343.6 750.9 343.2 C751.4 342.8 751.8 342.5 752.3 343.2 C752.8 343.9 753.2 345.6 753.7 347.0 C754.2 348.5 754.7 349.7 755.1 351.4 C755.6 353.2 755.8 355.6 756.2 356.7 C756.6 357.8 757.2 358.0 757.6 357.6 C758.0 357.1 758.1 355.2 758.6 354.1 C759.1 353.0 759.8 352.0 760.4 351.4 C761.0 350.9 761.6 350.6 762.1 350.9 C762.7 351.2 763.1 351.9 763.6 353.2 C764.0 354.4 764.1 357.2 764.6 357.9 C765.1 358.6 765.7 357.4 766.4 357.2 C767.0 357.0 767.5 356.6 768.1 356.7 C768.7 356.8 769.2 357.3 769.9 357.9 C770.5 358.5 770.8 359.7 771.6 360.2 C772.4 360.7 773.5 360.5 774.4 360.7 C775.4 360.9 776.2 360.1 776.9 361.4 C777.6 362.7 777.8 365.6 778.3 368.1 C778.8 370.5 779.2 372.7 779.7 375.1 C780.2 377.4 780.6 381.2 781.1 381.2 C781.5 381.2 781.7 377.9 782.1 375.1 C782.5 372.2 782.7 367.4 783.2 365.4 C783.6 363.5 784.0 364.4 784.6 364.2 C785.1 364.1 785.8 363.9 786.3 364.6 C786.9 365.3 787.2 366.7 787.7 368.1 C788.2 369.5 788.7 371.2 789.1 372.5 C789.6 373.7 789.8 376.2 790.2 375.1 C790.6 374.0 790.9 368.3 791.2 366.3 C791.6 364.4 791.8 364.5 792.3 364.2 C792.7 363.9 793.1 364.0 793.7 364.6 C794.3 365.1 794.9 365.1 795.4 367.2 C796.0 369.2 796.3 374.1 796.8 376.0 C797.4 377.9 797.7 377.3 798.2 377.7 C798.8 378.1 799.6 378.2 800.0 378.2 C800.4 378.3 800.1 378.4 800.5 378.0 C800.9 377.6 801.4 376.7 802.0 376.0 C802.6 375.3 803.6 374.4 804.0 374.0 L804 394.8 Z" fill="#72c3b4" clip-path="url(#up)"/>
<path d="M58.1 394.8 L58.1 375.4 C58.7 375.5 60.7 374.1 61.6 376.0 C62.4 377.8 62.2 383.1 62.6 385.6 C63.1 388.1 63.4 389.0 64.0 390.0 C64.6 391.0 65.5 390.6 66.1 391.2 C66.8 391.8 67.1 392.9 67.5 393.5 C67.9 394.1 68.0 394.2 68.2 394.7 C68.5 395.2 68.7 396.5 68.9 396.5 C69.2 396.5 69.4 396.0 69.6 394.7 C69.9 393.4 70.1 392.2 70.3 389.1 C70.6 386.0 70.7 379.7 71.0 377.7 C71.4 375.8 71.9 376.2 72.3 378.2 C72.6 380.3 72.8 386.2 73.1 389.1 C73.5 392.0 73.7 393.5 74.2 394.4 C74.6 395.2 75.0 396.2 75.6 394.0 C76.1 391.8 76.7 389.3 77.2 382.1 C77.7 374.9 77.9 359.9 78.4 354.1 C78.9 348.2 79.2 350.3 79.8 349.7 C80.4 349.0 81.0 349.9 81.5 350.6 C82.1 351.2 82.5 351.0 82.9 353.2 C83.4 355.4 83.7 360.0 84.2 362.8 C84.6 365.7 84.8 368.6 85.4 369.0 C86.0 369.3 86.9 366.3 87.7 364.6 C88.5 362.8 89.2 360.3 90.0 359.3 C90.7 358.3 91.1 358.5 91.7 359.0 C92.3 359.4 92.7 361.2 93.1 361.9 C93.5 362.6 93.8 363.8 94.2 362.8 C94.5 361.9 94.8 358.1 95.2 356.7 C95.6 355.3 96.0 354.9 96.4 354.9 C96.9 354.9 97.2 355.9 97.7 356.7 C98.1 357.5 98.6 359.2 99.1 359.3 C99.6 359.5 100.1 359.8 100.5 357.6 C100.8 355.4 100.9 349.6 101.2 347.0 C101.5 344.5 101.8 343.2 102.2 343.2 C102.6 343.2 103.1 344.5 103.4 347.0 C103.8 349.6 104.0 355.2 104.3 357.6 C104.7 359.9 105.0 361.3 105.4 360.2 C105.8 359.1 106.0 353.4 106.4 351.4 C106.9 349.4 107.3 349.0 107.8 349.1 C108.3 349.3 108.7 350.6 109.2 352.3 C109.8 354.0 110.3 356.9 111.0 358.4 C111.7 360.0 112.1 360.2 113.1 360.7 C114.1 361.3 115.7 360.1 116.6 361.4 C117.5 362.7 117.4 366.7 118.0 368.1 C118.6 369.4 119.1 369.7 119.7 369.0 C120.4 368.2 120.9 365.3 121.5 363.7 C122.1 362.1 122.6 361.0 123.2 360.2 C123.9 359.3 124.5 358.2 125.0 359.0 C125.5 359.8 125.7 361.2 126.1 364.6 C126.4 367.9 126.6 374.3 127.1 377.7 C127.6 381.1 128.2 382.5 128.9 383.5 C129.5 384.4 130.1 385.0 130.6 383.0 C131.1 381.0 131.2 374.7 131.7 372.5 C132.1 370.2 132.5 370.5 133.1 370.7 C133.6 370.9 134.1 371.6 134.8 373.3 C135.5 375.1 136.3 378.8 136.9 380.3 C137.5 381.9 137.9 382.7 138.3 382.1 C138.8 381.5 138.9 378.3 139.4 376.8 C139.8 375.4 140.3 374.2 140.8 374.2 C141.2 374.2 141.4 375.6 141.8 376.8 C142.3 378.1 142.6 380.7 143.2 381.2 C143.9 381.7 144.8 379.7 145.5 379.5 C146.2 379.2 146.5 379.5 147.3 380.0 C148.0 380.5 148.9 381.9 149.9 382.4 C150.8 383.0 151.9 384.6 152.5 383.0 C153.1 381.3 153.0 376.7 153.4 373.3 C153.7 370.0 154.0 365.8 154.4 364.2 C154.9 362.6 155.3 363.9 155.8 364.6 C156.3 365.3 156.7 368.1 157.2 368.1 C157.7 368.1 158.1 365.7 158.6 364.6 C159.1 363.4 159.5 362.1 160.0 361.6 C160.6 361.1 160.9 361.7 161.4 361.9 C162.0 362.2 162.4 363.2 163.0 363.2 C163.6 363.2 164.2 362.2 164.8 361.9 C165.4 361.7 165.8 361.1 166.4 361.6 C166.9 362.1 167.3 363.2 167.8 364.6 C168.3 365.9 168.6 367.4 169.2 369.0 C169.7 370.5 170.3 373.0 170.9 373.3 C171.5 373.6 172.1 371.4 172.7 370.7 C173.2 370.0 173.6 369.2 174.1 369.5 C174.6 369.8 175.0 370.5 175.5 372.5 C176.0 374.4 176.4 378.9 176.9 380.3 C177.4 381.8 177.8 381.1 178.3 380.3 C178.8 379.6 179.0 377.5 179.7 376.0 C180.3 374.4 181.0 372.6 181.8 371.6 C182.5 370.5 183.2 370.7 183.9 370.2 C184.6 369.7 185.3 373.1 185.8 369.0 C186.3 364.8 186.4 355.4 186.7 347.0 C187.0 338.7 187.1 327.4 187.4 322.5 C187.6 317.6 187.8 319.9 188.1 319.9 C188.4 319.9 188.7 316.0 189.0 322.5 C189.2 329.0 189.3 348.1 189.7 355.8 C190.0 363.5 190.2 364.2 190.7 365.4 C191.2 366.7 191.8 363.9 192.3 362.8 C192.8 361.7 193.2 361.0 193.7 359.3 C194.2 357.6 194.6 354.6 195.1 353.2 C195.6 351.8 196.0 351.5 196.5 351.4 C197.0 351.3 197.4 352.3 198.1 352.7 C198.7 353.0 199.4 353.2 200.0 353.2 C200.6 353.1 200.9 352.4 201.4 352.3 C201.9 352.2 202.4 349.5 202.8 352.7 C203.2 355.8 203.4 365.5 203.9 369.8 C204.3 374.2 204.7 375.3 205.3 376.8 C205.8 378.4 206.4 378.9 207.0 378.6 C207.6 378.3 208.3 377.1 208.8 375.1 C209.2 373.0 209.3 368.8 209.6 367.2 C210.0 365.6 210.2 365.8 210.5 366.0 C210.9 366.1 211.2 366.4 211.6 368.1 C211.9 369.7 212.2 374.0 212.6 375.1 C213.1 376.2 213.5 374.8 214.0 374.2 C214.5 373.6 214.9 371.9 215.4 371.6 C215.9 371.3 216.4 370.6 216.8 372.5 C217.3 374.3 217.5 380.5 217.9 382.1 C218.3 383.7 218.5 384.4 218.9 381.2 C219.3 378.1 219.7 367.9 220.2 364.6 C220.6 361.2 220.9 362.5 221.4 362.5 C221.9 362.5 222.3 363.6 222.8 364.6 C223.3 365.6 223.7 367.8 224.2 368.1 C224.7 368.4 225.0 367.9 225.6 366.3 C226.1 364.7 226.6 361.4 227.2 359.3 C227.8 357.3 228.4 355.8 228.9 354.9 C229.4 354.0 229.7 353.9 230.1 354.4 C230.6 354.9 231.1 355.1 231.5 357.6 C232.0 360.0 232.1 364.1 232.6 368.1 C233.1 372.0 233.6 376.8 234.2 379.5 C234.8 382.1 235.1 382.1 235.9 383.0 C236.7 383.8 237.6 384.0 238.6 384.2 C239.5 384.4 240.5 386.4 241.2 383.8 C241.8 381.3 241.6 373.0 242.1 369.8 C242.5 366.6 243.0 366.5 243.5 366.0 C244.0 365.4 244.3 366.0 244.9 366.7 C245.4 367.4 246.0 368.5 246.6 369.8 C247.2 371.2 247.8 373.7 248.4 374.2 C248.9 374.7 249.4 373.9 249.8 372.5 C250.1 371.0 250.1 367.5 250.5 366.0 C250.8 364.5 251.3 364.5 251.9 364.2 C252.4 363.9 253.0 363.8 253.6 364.2 C254.3 364.6 254.7 364.8 255.4 366.3 C256.0 367.8 256.6 372.8 257.1 372.5 C257.6 372.1 257.8 366.9 258.2 364.6 C258.6 362.3 258.8 360.7 259.2 359.7 C259.7 358.7 260.1 358.4 260.6 359.0 C261.1 359.5 261.5 361.8 262.0 362.8 C262.5 363.8 262.8 364.3 263.4 364.6 C264.1 364.8 264.8 363.7 265.5 364.2 C266.3 364.7 266.8 365.6 267.6 367.2 C268.5 368.8 269.3 372.1 270.1 373.3 C270.9 374.6 271.2 374.5 271.8 374.2 C272.5 373.9 273.0 372.7 273.6 371.6 C274.2 370.4 274.7 368.5 275.4 367.7 C276.0 366.9 276.6 366.5 277.1 367.2 C277.6 367.9 277.8 369.1 278.2 371.6 C278.5 374.1 278.8 379.8 279.2 381.2 C279.6 382.6 280.2 381.8 280.6 379.5 C281.0 377.1 280.9 370.9 281.3 368.1 C281.7 365.2 282.1 364.6 282.7 363.7 C283.3 362.7 283.8 362.8 284.5 362.8 C285.1 362.8 285.7 362.1 286.2 363.7 C286.7 365.3 286.9 368.4 287.3 371.6 C287.6 374.7 288.0 381.1 288.3 381.2 C288.6 381.4 288.7 374.6 289.0 372.5 C289.3 370.3 289.6 370.1 290.1 369.5 C290.6 368.9 291.2 368.7 291.8 369.1 C292.5 369.5 293.0 369.7 293.6 371.6 C294.1 373.4 294.5 376.6 295.0 379.5 C295.4 382.4 295.6 387.2 296.0 387.7 C296.4 388.2 296.7 384.2 297.1 382.1 C297.5 380.0 297.6 377.2 298.1 376.0 C298.6 374.7 299.1 375.2 299.9 375.1 C300.6 375.0 301.6 374.6 302.3 375.4 C303.0 376.2 303.4 377.5 303.7 379.5 C304.1 381.5 304.1 386.5 304.4 386.5 C304.8 386.5 305.0 381.8 305.5 379.5 C305.9 377.1 306.3 374.7 306.9 373.3 C307.5 372.0 308.2 372.3 309.0 372.1 C309.8 371.9 310.4 371.8 311.1 372.5 C311.8 373.1 312.3 373.6 312.9 376.0 C313.4 378.3 314.0 382.2 314.3 385.6 C314.5 389.0 314.4 392.0 314.5 394.8 C314.6 397.6 314.7 399.1 314.9 401.3 C315.1 403.5 315.3 405.2 315.6 407.0 C316.0 408.8 316.3 410.2 316.6 411.2 C317.0 412.3 317.2 412.4 317.5 412.8 C317.8 413.2 318.0 413.3 318.3 413.3 C318.6 413.2 318.9 413.2 319.2 412.5 C319.6 411.9 319.8 411.5 320.2 409.4 C320.6 407.4 321.0 403.5 321.4 401.3 C321.7 399.1 321.9 398.4 322.2 397.2 C322.4 396.1 322.6 395.8 322.8 394.8 C323.1 393.8 323.2 392.4 323.5 391.5 C323.7 390.6 323.8 389.8 324.0 389.9 C324.2 390.0 324.4 391.0 324.6 391.9 C324.8 392.8 324.8 393.7 325.1 394.8 C325.4 395.9 325.8 397.3 326.1 398.0 C326.4 398.8 326.6 399.0 326.9 399.0 C327.2 399.0 327.5 398.8 327.9 398.0 C328.2 397.3 328.4 395.4 328.7 394.8 C328.9 394.2 329.0 396.0 329.3 394.7 C329.7 393.4 330.2 389.3 330.7 387.4 C331.3 385.4 331.9 384.3 332.5 383.8 C333.0 383.4 333.6 382.8 333.9 384.7 C334.2 386.7 334.1 391.7 334.2 394.7 C334.4 397.7 334.3 398.1 334.6 401.3 C335.0 404.5 335.7 409.6 336.3 412.7 C336.8 415.8 337.3 417.7 337.6 418.4 C338.0 419.1 338.1 419.1 338.5 416.8 C338.8 414.4 339.3 409.3 339.5 405.4 C339.8 401.4 339.7 399.6 339.9 394.8 C340.1 390.0 340.2 381.7 340.5 378.6 C340.8 375.5 341.3 377.1 341.6 377.7 C341.9 378.3 342.0 379.0 342.3 382.1 C342.5 385.2 342.8 391.0 343.0 394.7 C343.2 398.4 343.3 401.9 343.6 402.8 C343.9 403.7 344.3 401.1 344.7 399.7 C345.1 398.2 345.3 398.6 345.8 394.8 C346.3 391.0 346.7 384.3 347.2 378.6 C347.7 372.8 348.1 366.5 348.6 362.8 C349.1 359.1 349.5 359.1 350.0 357.9 C350.5 356.7 350.9 356.2 351.4 356.2 C351.9 356.1 352.3 356.4 352.8 357.6 C353.3 358.8 353.6 361.9 354.2 362.8 C354.8 363.7 355.3 362.5 356.0 362.5 C356.6 362.5 357.1 361.7 357.7 362.8 C358.3 364.0 358.4 367.8 359.1 369.0 C359.8 370.1 360.7 369.5 361.6 369.5 C362.4 369.5 363.1 370.3 363.7 369.0 C364.2 367.6 364.3 363.4 364.7 361.9 C365.2 360.5 365.6 360.9 366.1 361.1 C366.6 361.2 367.0 361.2 367.5 362.8 C368.0 364.4 368.4 366.4 368.9 369.8 C369.4 373.3 369.8 378.9 370.3 382.1 C370.8 385.2 371.3 388.1 371.7 387.4 C372.2 386.6 372.3 379.7 372.8 377.7 C373.3 375.7 373.8 376.4 374.5 376.1 C375.2 375.9 376.0 375.7 376.6 376.1 C377.3 376.6 377.6 376.6 378.0 378.6 C378.5 380.6 378.6 386.2 379.1 387.4 C379.6 388.5 380.2 385.7 380.8 385.2 C381.5 384.8 382.0 384.0 382.6 384.7 C383.2 385.4 383.6 387.4 384.0 389.1 C384.4 390.8 384.7 393.4 385.0 394.4 C385.4 395.3 385.7 395.9 386.1 394.4 C386.5 392.8 386.6 388.0 387.1 385.6 C387.7 383.2 388.3 383.4 388.9 381.2 C389.5 379.0 390.1 377.6 390.7 373.3 C391.2 369.1 391.6 360.9 392.1 357.6 C392.6 354.2 393.0 354.9 393.5 354.9 C393.9 354.9 394.1 355.2 394.5 357.6 C395.0 359.9 395.3 365.6 395.9 368.1 C396.5 370.6 397.0 370.3 397.7 371.6 C398.4 372.8 399.1 373.5 399.8 375.1 C400.5 376.7 401.0 377.8 401.5 380.3 C402.1 382.9 402.5 386.5 402.9 389.1 C403.4 391.7 403.7 393.3 404.0 394.7 C404.3 396.2 404.4 397.2 404.7 397.2 C404.9 397.2 405.1 397.4 405.4 394.7 C405.6 392.0 405.8 386.3 406.1 382.1 C406.4 377.9 406.6 373.9 407.1 371.6 C407.6 369.2 408.2 369.5 408.9 369.0 C409.5 368.4 410.1 368.0 410.6 368.4 C411.1 368.9 411.4 369.1 411.7 371.6 C412.0 374.0 412.1 379.9 412.4 382.1 C412.7 384.3 412.9 384.0 413.4 383.8 C413.9 383.7 414.6 383.4 415.2 381.2 C415.8 379.0 416.1 374.1 416.6 371.6 C417.1 369.1 417.5 367.8 418.0 367.2 C418.4 366.6 418.7 365.9 419.0 368.1 C419.4 370.3 419.7 377.0 420.1 379.5 C420.5 381.9 420.9 381.3 421.5 381.7 C422.1 382.2 422.7 382.1 423.6 382.1 C424.5 382.1 425.6 382.7 426.4 381.7 C427.2 380.8 427.3 379.6 427.8 376.8 C428.3 374.1 428.6 369.0 429.2 366.3 C429.8 363.6 430.4 362.8 431.0 361.9 C431.5 361.1 431.9 360.9 432.4 361.4 C432.9 361.9 433.3 362.8 433.8 364.6 C434.2 366.3 434.2 370.2 434.8 371.2 C435.4 372.2 436.2 370.3 436.9 370.2 C437.6 370.1 438.2 369.5 438.7 370.7 C439.2 371.9 439.3 374.8 439.7 376.8 C440.1 378.9 440.3 381.8 440.8 382.1 C441.2 382.4 441.7 380.3 442.2 378.6 C442.7 376.9 443.0 373.7 443.6 372.5 C444.1 371.2 444.8 372.7 445.3 371.6 C445.9 370.5 446.2 368.2 446.7 366.3 C447.2 364.4 447.6 362.2 448.1 361.1 C448.6 360.0 449.1 359.6 449.5 360.2 C450.0 360.8 450.2 361.9 450.6 364.6 C451.0 367.3 451.1 371.3 451.6 375.1 C452.1 378.9 452.8 382.4 453.4 385.6 C454.0 388.8 454.4 391.0 454.8 392.6 C455.2 394.2 455.3 394.3 455.5 394.7 C455.7 395.1 455.7 394.5 455.9 394.8 C456.1 395.1 456.4 396.2 456.7 396.4 C457.0 396.6 457.3 396.3 457.5 396.0 C457.8 395.7 457.9 396.0 458.1 394.8 C458.3 393.5 458.3 390.4 458.6 389.1 C459.0 387.8 459.5 387.4 460.0 387.4 C460.6 387.4 461.1 388.1 461.4 389.1 C461.8 390.1 461.7 393.9 462.1 393.0 C462.6 392.0 463.3 386.0 463.9 383.8 C464.5 381.7 464.8 381.5 465.3 381.2 C465.8 380.9 466.2 380.7 466.7 382.1 C467.2 383.5 467.6 386.8 468.1 389.1 C468.6 391.4 469.2 393.7 469.5 394.7 C469.7 395.7 469.6 394.2 469.7 394.8 C469.9 395.4 470.1 397.3 470.3 398.0 C470.6 398.7 470.8 398.8 471.1 398.7 C471.4 398.5 471.7 397.9 471.9 397.2 C472.2 396.5 472.2 397.8 472.4 394.8 C472.6 391.7 472.7 383.5 473.0 380.3 C473.3 377.2 473.7 377.2 474.1 377.2 C474.4 377.2 474.8 377.2 475.1 380.3 C475.4 383.5 475.7 392.1 475.8 394.7 C475.9 397.3 475.8 393.9 475.9 394.8 C475.9 395.7 475.9 397.8 476.3 399.7 C476.6 401.6 477.3 403.9 477.9 405.4 C478.5 406.9 479.1 407.8 479.5 408.0 C480.0 408.1 480.1 408.6 480.3 406.2 C480.6 403.8 480.7 398.8 480.9 394.8 C481.1 390.8 481.0 386.0 481.4 383.8 C481.8 381.7 482.5 382.9 483.2 383.0 C483.8 383.0 484.4 382.1 484.9 384.2 C485.4 386.3 485.8 392.8 486.0 394.7 C486.0 396.6 486.0 394.0 486.0 394.8 C486.1 395.5 486.0 397.8 486.3 398.9 C486.6 399.9 487.1 400.4 487.7 400.6 C488.3 400.9 489.0 400.9 489.7 400.5 C490.4 400.1 491.0 399.5 491.3 398.4 C491.7 397.4 491.6 396.9 491.8 394.8 C492.1 392.6 492.3 388.1 492.6 386.5 C493.0 384.8 493.3 385.1 493.7 385.6 C494.1 386.1 494.4 387.5 494.7 389.1 C495.1 390.7 495.2 393.0 495.4 394.7 C495.7 396.5 495.9 398.5 496.2 398.9 C496.5 399.2 496.9 397.5 497.2 396.8 C497.5 396.1 497.4 397.1 497.7 394.8 C498.0 392.4 498.5 386.1 498.9 383.8 C499.4 381.6 499.5 383.2 500.0 382.1 C500.5 381.0 501.1 379.0 501.8 377.7 C502.4 376.4 503.1 375.7 503.9 374.7 C504.6 373.8 505.3 373.0 506.0 372.5 C506.7 372.0 507.1 371.8 507.7 371.9 C508.3 372.1 508.5 372.4 509.1 373.3 C509.7 374.2 510.1 375.8 510.9 376.8 C511.6 377.8 512.5 378.2 513.3 378.9 C514.1 379.7 514.9 381.9 515.4 381.2 C516.0 380.5 516.1 376.9 516.5 375.1 C516.9 373.3 517.1 371.9 517.5 371.2 C517.9 370.6 518.2 370.3 518.6 371.6 C519.0 372.9 519.2 376.5 519.6 378.6 C520.1 380.6 520.6 383.3 521.0 383.0 C521.5 382.7 521.7 378.3 522.1 376.8 C522.5 375.4 522.7 375.3 523.1 375.1 C523.6 374.8 524.0 374.7 524.5 375.4 C525.0 376.1 525.4 378.6 525.9 378.9 C526.4 379.3 526.8 377.7 527.3 377.2 C527.9 376.7 528.5 376.2 529.1 376.1 C529.7 376.1 530.0 376.1 530.5 376.8 C531.0 377.6 531.3 379.0 531.9 380.3 C532.5 381.7 533.0 382.8 533.6 384.2 C534.3 385.6 535.1 387.0 535.7 388.2 C536.4 389.5 537.0 392.3 537.5 391.2 C538.0 390.1 538.2 385.9 538.6 382.1 C538.9 378.2 538.9 372.5 539.3 369.8 C539.6 367.1 539.9 367.2 540.3 367.0 C540.7 366.9 541.0 367.3 541.4 369.0 C541.7 370.6 541.9 374.1 542.4 376.0 C542.9 377.9 543.5 378.7 544.2 379.5 C544.8 380.2 545.4 380.9 545.9 380.0 C546.4 379.0 546.5 375.7 547.0 374.2 C547.4 372.7 547.9 371.9 548.4 371.6 C548.9 371.3 549.3 371.4 549.8 372.5 C550.3 373.6 550.7 376.9 551.2 377.7 C551.6 378.5 551.9 378.3 552.2 376.8 C552.5 375.4 552.6 371.6 552.9 369.8 C553.2 368.1 553.6 367.4 554.0 367.2 C554.4 367.0 554.6 366.7 555.0 369.0 C555.4 371.2 555.6 377.8 556.1 379.5 C556.6 381.1 557.1 378.6 557.8 378.2 C558.5 377.9 559.2 377.5 559.9 377.5 C560.6 377.6 561.0 377.9 561.7 378.6 C562.4 379.3 563.0 380.4 563.8 381.2 C564.5 382.0 565.3 383.8 565.9 383.0 C566.5 382.2 566.4 378.9 566.9 376.8 C567.4 374.8 568.0 373.3 568.7 371.6 C569.4 369.8 570.0 368.5 570.8 367.2 C571.6 365.9 572.1 365.0 572.9 364.2 C573.7 363.4 574.4 363.1 575.0 362.8 C575.6 362.5 576.0 362.2 576.4 362.5 C576.8 362.8 577.1 361.2 577.5 364.6 C577.8 367.9 577.8 378.1 578.2 381.2 C578.5 384.4 578.8 382.9 579.2 382.1 C579.6 381.3 579.8 378.2 580.3 376.8 C580.7 375.5 581.2 374.9 581.7 374.7 C582.2 374.6 582.5 375.3 583.1 376.0 C583.6 376.6 584.2 377.9 584.8 378.2 C585.4 378.6 586.0 378.5 586.6 377.9 C587.1 377.3 587.5 377.2 588.0 375.1 C588.4 373.0 588.6 368.3 589.0 366.3 C589.4 364.4 589.7 364.4 590.1 364.2 C590.4 364.1 590.7 364.0 591.1 365.4 C591.5 366.9 591.7 370.4 592.2 372.5 C592.6 374.5 593.0 375.3 593.6 376.8 C594.1 378.4 594.8 379.6 595.3 381.2 C595.9 382.8 596.2 384.1 596.7 385.6 C597.2 387.1 597.7 389.1 598.1 389.5 C598.6 389.8 598.7 388.8 599.2 387.4 C599.6 385.9 600.1 383.1 600.6 381.2 C601.1 379.3 601.5 379.8 602.0 376.8 C602.5 373.8 602.9 368.7 603.4 364.6 C603.8 360.5 604.1 356.9 604.4 354.1 C604.8 351.2 605.0 350.0 605.5 348.8 C605.9 347.6 606.4 347.6 606.9 347.6 C607.4 347.6 607.8 347.9 608.3 348.8 C608.8 349.7 609.2 350.6 609.7 352.3 C610.2 354.0 610.6 356.7 611.1 358.4 C611.6 360.2 612.0 361.8 612.5 361.9 C613.0 362.1 613.4 359.9 613.9 359.3 C614.4 358.7 614.8 358.3 615.3 358.6 C615.8 358.9 616.3 360.3 616.7 361.1 C617.1 361.8 617.3 362.7 617.8 362.8 C618.2 363.0 618.7 362.4 619.2 361.9 C619.7 361.5 620.1 360.4 620.6 360.4 C621.1 360.4 621.5 360.6 622.0 361.9 C622.4 363.3 622.6 367.3 623.0 367.7 C623.4 368.2 623.6 365.8 624.1 364.6 C624.5 363.4 625.0 361.8 625.5 361.1 C626.0 360.3 626.4 360.0 626.9 360.4 C627.4 360.7 627.8 362.2 628.3 362.8 C628.8 363.4 629.3 364.6 629.7 363.7 C630.1 362.7 630.1 361.3 630.4 357.6 C630.6 353.8 630.8 345.8 631.1 342.7 C631.4 339.6 631.7 340.2 632.1 340.4 C632.5 340.5 632.7 342.3 633.2 343.5 C633.6 344.7 634.1 347.0 634.6 347.0 C635.1 347.0 635.5 344.5 636.0 343.5 C636.5 342.6 636.9 341.9 637.4 341.8 C637.9 341.6 638.3 342.2 638.8 342.7 C639.3 343.1 639.7 344.9 640.2 344.4 C640.7 343.9 641.1 341.1 641.6 340.0 C642.1 339.0 642.5 338.5 643.0 338.6 C643.4 338.8 643.7 338.6 644.0 340.9 C644.4 343.2 644.7 350.3 645.1 351.4 C645.5 352.5 645.8 350.7 646.1 347.0 C646.5 343.4 646.8 334.5 647.2 331.3 C647.6 328.1 647.9 329.2 648.2 329.2 C648.6 329.2 649.0 329.2 649.3 331.3 C649.6 333.4 649.7 337.9 650.0 340.9 C650.3 343.9 650.6 346.5 651.1 347.9 C651.5 349.3 652.0 349.0 652.5 348.8 C652.9 348.6 653.1 347.1 653.5 346.7 C653.9 346.3 654.4 345.5 654.9 346.3 C655.4 347.2 655.8 350.4 656.3 351.4 C656.8 352.4 657.3 352.7 657.7 352.0 C658.2 351.2 658.3 348.6 658.8 347.0 C659.2 345.5 659.6 344.1 660.2 343.2 C660.7 342.2 661.3 342.0 661.9 341.8 C662.5 341.6 663.0 341.5 663.7 342.1 C664.3 342.8 664.9 343.5 665.4 345.3 C666.0 347.1 666.3 350.9 666.8 352.3 C667.3 353.7 667.7 353.5 668.2 353.2 C668.7 352.9 669.1 351.2 669.6 350.6 C670.1 350.0 670.5 349.5 671.0 349.9 C671.5 350.2 671.8 352.0 672.4 352.7 C673.1 353.3 673.8 353.6 674.5 353.7 C675.3 353.8 676.0 353.9 676.6 353.2 C677.3 352.5 677.5 350.5 678.0 349.7 C678.5 348.9 678.9 348.5 679.4 348.8 C679.9 349.1 680.3 350.8 680.8 351.4 C681.4 352.1 682.0 352.8 682.6 352.3 C683.2 351.8 683.4 349.8 684.0 348.8 C684.6 347.8 685.2 347.1 685.7 346.7 C686.3 346.3 686.6 346.0 687.1 346.3 C687.7 346.7 688.1 348.1 688.9 348.8 C689.7 349.5 690.5 350.0 691.4 350.2 C692.2 350.4 692.9 350.1 693.8 349.7 C694.7 349.3 695.4 348.7 696.3 347.9 C697.1 347.1 698.0 346.7 698.7 345.3 C699.5 343.9 699.9 342.6 700.5 340.0 C701.0 337.5 701.4 333.7 701.9 331.3 C702.3 328.8 702.5 327.4 702.9 326.4 C703.3 325.3 703.6 325.1 704.0 325.3 C704.4 325.6 704.6 324.2 705.0 327.8 C705.4 331.4 705.6 342.0 706.1 345.3 C706.6 348.6 707.2 346.2 707.8 346.2 C708.5 346.1 708.9 345.0 709.6 344.9 C710.2 344.8 710.7 345.1 711.3 345.6 C712.0 346.2 712.5 347.2 713.1 347.9 C713.7 348.6 714.3 349.8 714.8 349.7 C715.4 349.5 715.7 347.8 716.2 347.0 C716.7 346.3 717.1 345.8 717.6 345.6 C718.1 345.5 718.5 345.6 719.0 346.3 C719.5 347.1 720.0 350.8 720.4 349.7 C720.9 348.5 721.1 343.1 721.5 340.0 C721.9 337.0 722.2 334.1 722.5 332.7 C722.9 331.3 723.2 331.5 723.6 332.2 C724.0 332.8 724.5 335.1 725.0 336.5 C725.5 338.0 725.9 339.9 726.4 340.0 C726.9 340.2 727.3 338.0 727.8 337.4 C728.3 336.8 728.7 336.4 729.2 336.9 C729.7 337.4 730.1 338.7 730.6 340.0 C731.1 341.4 731.4 343.8 732.0 344.4 C732.6 345.0 733.5 343.2 734.1 343.5 C734.7 343.9 735.0 344.8 735.5 346.2 C736.0 347.6 736.3 350.3 736.9 351.4 C737.5 352.6 737.9 352.2 738.7 352.7 C739.4 353.1 740.2 353.6 741.1 353.7 C742.0 353.8 742.7 353.6 743.6 353.2 C744.5 352.8 745.1 351.6 746.0 351.4 C746.9 351.2 747.9 353.1 748.5 352.0 C749.1 350.8 749.1 346.9 749.5 345.3 C750.0 343.7 750.4 343.6 750.9 343.2 C751.4 342.8 751.8 342.5 752.3 343.2 C752.8 343.9 753.2 345.6 753.7 347.0 C754.2 348.5 754.7 349.7 755.1 351.4 C755.6 353.2 755.8 355.6 756.2 356.7 C756.6 357.8 757.2 358.0 757.6 357.6 C758.0 357.1 758.1 355.2 758.6 354.1 C759.1 353.0 759.8 352.0 760.4 351.4 C761.0 350.9 761.6 350.6 762.1 350.9 C762.7 351.2 763.1 351.9 763.6 353.2 C764.0 354.4 764.1 357.2 764.6 357.9 C765.1 358.6 765.7 357.4 766.4 357.2 C767.0 357.0 767.5 356.6 768.1 356.7 C768.7 356.8 769.2 357.3 769.9 357.9 C770.5 358.5 770.8 359.7 771.6 360.2 C772.4 360.7 773.5 360.5 774.4 360.7 C775.4 360.9 776.2 360.1 776.9 361.4 C777.6 362.7 777.8 365.6 778.3 368.1 C778.8 370.5 779.2 372.7 779.7 375.1 C780.2 377.4 780.6 381.2 781.1 381.2 C781.5 381.2 781.7 377.9 782.1 375.1 C782.5 372.2 782.7 367.4 783.2 365.4 C783.6 363.5 784.0 364.4 784.6 364.2 C785.1 364.1 785.8 363.9 786.3 364.6 C786.9 365.3 787.2 366.7 787.7 368.1 C788.2 369.5 788.7 371.2 789.1 372.5 C789.6 373.7 789.8 376.2 790.2 375.1 C790.6 374.0 790.9 368.3 791.2 366.3 C791.6 364.4 791.8 364.5 792.3 364.2 C792.7 363.9 793.1 364.0 793.7 364.6 C794.3 365.1 794.9 365.1 795.4 367.2 C796.0 369.2 796.3 374.1 796.8 376.0 C797.4 377.9 797.7 377.3 798.2 377.7 C798.8 378.1 799.6 378.2 800.0 378.2 C800.4 378.3 800.1 378.4 800.5 378.0 C800.9 377.6 801.4 376.7 802.0 376.0 C802.6 375.3 803.6 374.4 804.0 374.0 L804 394.8 Z" fill="#f4566a" clip-path="url(#dn)"/>
<path d="M58.0 412.8 C58.5 412.7 60.5 413.1 61.2 412.3 C61.9 411.5 61.2 408.1 62.6 407.2 C64.3 406.3 70.7 407.3 72.5 406.2 C74.3 405.1 73.8 401.5 74.8 399.7 C75.8 397.9 78.1 396.0 79.0 394.5 C79.9 393.0 80.0 390.1 80.9 389.4 C81.8 388.7 83.6 390.0 85.0 390.0 C86.5 389.9 88.7 389.4 90.3 389.1 C91.9 388.8 94.0 388.0 95.6 387.7 C97.1 387.4 99.2 386.9 100.8 387.0 C102.4 387.1 104.6 387.9 106.1 388.2 C107.5 388.5 109.1 389.0 110.5 389.1 C111.8 389.2 113.4 388.8 114.8 388.8 C116.3 388.8 118.3 389.0 120.1 389.1 C121.9 389.2 125.0 389.5 127.1 389.5 C129.2 389.5 132.0 389.2 134.1 389.1 C136.2 389.1 139.0 389.0 141.1 389.1 C143.2 389.2 146.0 390.0 148.1 390.0 C150.2 390.0 153.3 390.0 155.1 389.1 C157.0 388.2 159.1 384.8 160.4 383.8 C161.7 382.9 162.9 382.8 163.9 383.0 C165.0 383.1 166.1 384.3 167.4 384.7 C168.7 385.1 171.1 385.7 172.7 385.6 C174.2 385.5 176.6 384.6 177.9 383.8 C179.2 383.1 180.2 381.5 181.4 380.3 C182.6 379.2 184.5 377.3 185.8 376.0 C187.1 374.6 188.7 372.6 190.2 371.6 C191.6 370.6 194.0 369.7 195.4 369.5 C196.9 369.2 198.8 369.2 200.0 369.8 C201.2 370.4 202.5 372.1 203.5 373.3 C204.6 374.5 206.0 377.0 207.0 377.7 C208.1 378.4 209.2 378.1 210.5 378.2 C211.8 378.4 214.5 378.8 215.8 378.6 C217.1 378.4 218.2 377.6 219.3 376.8 C220.3 376.0 221.5 374.1 222.8 373.3 C224.1 372.5 226.5 371.7 228.0 371.6 C229.6 371.4 232.0 371.9 233.3 372.5 C234.6 373.0 235.6 374.2 236.8 375.1 C238.0 376.0 239.9 377.8 241.2 378.2 C242.5 378.6 244.1 377.7 245.6 377.7 C247.0 377.8 249.5 377.7 250.8 378.6 C252.1 379.5 253.3 382.7 254.3 383.8 C255.4 385.0 256.5 385.9 257.8 386.5 C259.1 387.1 261.2 387.6 263.1 387.7 C264.9 387.8 268.3 387.7 270.1 387.4 C271.9 387.0 273.5 386.1 275.4 385.6 C277.2 385.1 280.5 384.1 282.4 383.8 C284.2 383.6 285.8 383.9 287.6 384.2 C289.5 384.5 292.5 385.3 294.6 385.6 C296.7 385.9 299.5 386.2 301.6 386.5 C303.7 386.7 306.8 386.7 308.6 387.4 C310.5 388.0 312.9 390.5 313.9 390.9 C315.0 391.2 314.9 390.6 315.7 390.0 C316.4 389.3 318.1 386.7 319.2 386.5 C320.2 386.3 321.6 389.0 322.7 388.8 C323.7 388.5 324.9 385.4 326.2 384.7 C327.5 384.0 329.3 384.3 331.4 384.2 C333.5 384.1 338.6 384.6 340.2 384.2 C341.8 383.7 341.5 382.8 342.3 381.2 C343.1 379.6 344.6 374.6 345.4 373.3 C346.3 372.0 347.4 372.6 348.1 372.5 C348.8 372.3 349.2 372.5 350.0 372.5 C350.8 372.4 352.5 371.8 353.5 371.9 C354.6 372.1 356.0 372.9 357.0 373.3 C358.1 373.8 359.2 374.4 360.5 375.1 C361.8 375.7 364.5 376.9 365.8 377.7 C367.1 378.5 368.0 379.7 369.3 380.3 C370.6 381.0 373.0 381.5 374.5 382.1 C376.1 382.7 378.2 383.7 379.8 384.2 C381.4 384.7 383.5 385.0 385.0 385.2 C386.6 385.5 388.7 385.8 390.3 385.6 C391.9 385.4 394.2 384.5 395.6 383.8 C396.9 383.2 398.0 381.5 399.1 381.2 C400.1 381.0 401.5 381.7 402.6 382.1 C403.6 382.5 405.0 383.1 406.1 383.8 C407.1 384.6 408.0 387.0 409.6 387.4 C411.2 387.7 414.5 386.5 416.6 386.5 C418.7 386.4 421.5 386.9 423.6 387.0 C425.7 387.1 428.5 387.2 430.6 387.4 C432.7 387.5 435.5 387.8 437.6 388.2 C439.7 388.6 443.0 389.5 444.6 390.0 C446.2 390.5 447.2 390.7 448.1 391.7 C449.1 392.8 450.1 395.8 450.8 397.0 C451.4 398.2 452.0 399.6 452.5 399.6 C453.0 399.6 453.7 397.9 454.3 397.0 C454.8 396.1 455.4 394.7 456.0 393.5 C456.7 392.3 457.5 390.3 458.6 389.1 C459.8 387.9 462.3 386.4 463.9 385.6 C465.5 384.8 467.8 384.4 469.2 383.8 C470.5 383.3 471.3 382.6 472.7 382.1 C474.0 381.6 476.6 380.8 477.9 380.3 C479.2 379.9 480.1 378.9 481.4 378.9 C482.7 378.9 485.4 380.0 486.7 380.3 C488.0 380.7 488.9 381.2 490.2 381.2 C491.5 381.3 494.0 380.8 495.4 380.7 C496.9 380.6 498.5 380.5 500.0 380.3 C501.5 380.2 503.7 379.5 505.3 379.5 C506.8 379.4 508.7 379.8 510.5 380.0 C512.4 380.2 515.4 380.5 517.5 380.7 C519.6 380.9 522.4 381.4 524.5 381.2 C526.6 381.0 530.0 380.0 531.5 379.5 C533.1 378.9 533.7 378.1 535.0 377.7 C536.4 377.3 538.7 376.9 540.3 376.8 C541.9 376.8 543.7 377.1 545.6 377.2 C547.4 377.3 550.5 377.6 552.6 377.7 C554.7 377.9 557.5 378.2 559.6 378.2 C561.7 378.3 564.5 378.1 566.6 377.9 C568.7 377.7 571.8 376.9 573.6 376.8 C575.4 376.7 577.3 377.1 578.9 377.2 C580.4 377.3 582.5 378.0 584.1 377.7 C585.7 377.4 587.8 376.0 589.4 375.1 C590.9 374.2 592.8 372.2 594.6 371.6 C596.5 370.9 600.1 371.8 601.6 370.7 C603.2 369.7 603.6 366.9 605.1 364.6 C606.7 362.2 610.8 356.5 612.1 354.9 C613.5 353.4 613.1 353.9 613.9 354.1 C614.7 354.2 616.1 356.2 617.4 356.2 C618.7 356.2 620.8 354.8 622.7 354.1 C624.5 353.3 628.1 352.1 629.7 351.4 C631.2 350.8 631.9 349.5 633.2 349.7 C634.5 349.8 637.1 351.1 638.4 352.3 C639.7 353.5 640.9 356.9 641.9 357.6 C643.0 358.2 644.2 357.2 645.4 356.7 C646.7 356.2 648.5 354.6 650.0 354.1 C651.5 353.5 653.7 353.4 655.3 353.2 C656.8 353.0 658.7 352.5 660.5 352.7 C662.4 352.8 665.4 353.7 667.5 354.1 C669.6 354.4 672.4 354.9 674.5 354.9 C676.6 354.9 679.4 354.3 681.5 354.1 C683.6 353.8 686.4 353.2 688.6 353.2 C690.7 353.1 693.5 353.8 695.6 353.7 C697.7 353.6 700.5 352.7 702.6 352.7 C704.7 352.6 707.5 353.0 709.6 353.2 C711.7 353.3 715.0 353.3 716.6 353.7 C718.2 354.1 719.0 354.8 720.1 355.8 C721.1 356.8 722.5 359.9 723.6 360.2 C724.6 360.5 726.1 358.3 727.1 357.6 C728.2 356.8 729.0 355.5 730.6 354.9 C732.2 354.4 735.8 354.6 737.6 354.1 C739.5 353.5 741.3 352.0 742.9 351.4 C744.5 350.8 746.3 350.2 748.1 350.2 C750.0 350.2 753.8 351.0 755.1 351.4 C756.5 351.9 755.8 353.0 756.9 353.2 C757.9 353.4 759.9 352.7 762.1 352.7 C764.4 352.6 769.8 352.9 771.6 352.8 C773.5 352.7 773.7 351.9 774.5 352.2 C775.4 352.6 776.6 353.7 777.4 355.1 C778.3 356.5 779.3 360.6 780.3 361.5 C781.4 362.5 783.3 361.2 784.4 361.5 C785.6 361.9 786.7 363.6 787.9 363.8 C789.1 364.1 791.2 362.9 792.6 363.3 C794.0 363.6 796.1 366.0 797.2 366.2 C798.3 366.3 799.2 364.7 800.1 364.4 C801.1 364.1 803.1 364.2 803.6 364.2" fill="none" stroke="#f1b263" stroke-opacity="0.48" stroke-width="0.7"/>
<text x="51.5" y="313.6" font-size="7.1" fill="#151515" stroke="#151515" stroke-width="0.2" text-anchor="end">0.0200%</text>
<text x="51.5" y="334.6" font-size="7.1" fill="#151515" stroke="#151515" stroke-width="0.2" text-anchor="end">0.0150%</text>
<text x="51.5" y="355.6" font-size="7.1" fill="#151515" stroke="#151515" stroke-width="0.2" text-anchor="end">0.0100%</text>
<text x="51.5" y="376.1" font-size="7.1" fill="#151515" stroke="#151515" stroke-width="0.2" text-anchor="end">0.0050%</text>
<text x="51.5" y="397.1" font-size="7.1" fill="#151515" stroke="#151515" stroke-width="0.2" text-anchor="end">0%</text>
<text x="51.5" y="417.6" font-size="7.1" fill="#151515" stroke="#151515" stroke-width="0.2" text-anchor="end">-0.0050%</text>
<text x="51.5" y="438.1" font-size="7.1" fill="#151515" stroke="#151515" stroke-width="0.2" text-anchor="end">-0.0100%</text>
<text x="810.5" y="313.7" font-size="7.4" fill="#151515" stroke="#151515" stroke-width="0.2" textLength="30.5" lengthAdjust="spacingAndGlyphs">$134.96K</text>
<text x="810.5" y="326.2" font-size="7.4" fill="#151515" stroke="#151515" stroke-width="0.2" textLength="30.5" lengthAdjust="spacingAndGlyphs">$130.00K</text>
<text x="810.5" y="351.2" font-size="7.4" fill="#151515" stroke="#151515" stroke-width="0.2" textLength="30.5" lengthAdjust="spacingAndGlyphs">$120.00K</text>
<text x="810.5" y="376.2" font-size="7.4" fill="#151515" stroke="#151515" stroke-width="0.2" textLength="30.5" lengthAdjust="spacingAndGlyphs">$110.00K</text>
<text x="810.5" y="401.2" font-size="7.4" fill="#151515" stroke="#151515" stroke-width="0.2" textLength="30.5" lengthAdjust="spacingAndGlyphs">$100.00K</text>
<text x="810.5" y="426.2" font-size="7.4" fill="#151515" stroke="#151515" stroke-width="0.2" textLength="26.7" lengthAdjust="spacingAndGlyphs">$90.00K</text>
<text x="810.5" y="438.2" font-size="7.4" fill="#151515" stroke="#151515" stroke-width="0.2" textLength="26.7" lengthAdjust="spacingAndGlyphs">$84.92K</text>
<text x="74" y="447.1" font-size="7.2" fill="#151515" stroke="#151515" stroke-width="0.18" text-anchor="middle">8 May</text>
<text x="108" y="447.1" font-size="7.2" fill="#151515" stroke="#151515" stroke-width="0.18" text-anchor="middle">12 May</text>
<text x="141" y="447.1" font-size="7.2" fill="#151515" stroke="#151515" stroke-width="0.18" text-anchor="middle">16 May</text>
<text x="175" y="447.1" font-size="7.2" fill="#151515" stroke="#151515" stroke-width="0.18" text-anchor="middle">20 May</text>
<text x="208" y="447.1" font-size="7.2" fill="#151515" stroke="#151515" stroke-width="0.18" text-anchor="middle">24 May</text>
<text x="241" y="447.1" font-size="7.2" fill="#151515" stroke="#151515" stroke-width="0.18" text-anchor="middle">28 May</text>
<text x="274" y="447.1" font-size="7.2" fill="#151515" stroke="#151515" stroke-width="0.18" text-anchor="middle">1 Jun</text>
<text x="307" y="447.1" font-size="7.2" fill="#151515" stroke="#151515" stroke-width="0.18" text-anchor="middle">5 Jun</text>
<text x="341" y="447.1" font-size="7.2" fill="#151515" stroke="#151515" stroke-width="0.18" text-anchor="middle">9 Jun</text>
<text x="374" y="447.1" font-size="7.2" fill="#151515" stroke="#151515" stroke-width="0.18" text-anchor="middle">13 Jun</text>
<text x="407" y="447.1" font-size="7.2" fill="#151515" stroke="#151515" stroke-width="0.18" text-anchor="middle">17 Jun</text>
<text x="441" y="447.1" font-size="7.2" fill="#151515" stroke="#151515" stroke-width="0.18" text-anchor="middle">21 Jun</text>
<text x="474" y="447.1" font-size="7.2" fill="#151515" stroke="#151515" stroke-width="0.18" text-anchor="middle">25 Jun</text>
<text x="507" y="447.1" font-size="7.2" fill="#151515" stroke="#151515" stroke-width="0.18" text-anchor="middle">29 Jun</text>
<text x="541" y="447.1" font-size="7.2" fill="#151515" stroke="#151515" stroke-width="0.18" text-anchor="middle">3 Jul</text>
<text x="574" y="447.1" font-size="7.2" fill="#151515" stroke="#151515" stroke-width="0.18" text-anchor="middle">7 Jul</text>
<text x="607" y="447.1" font-size="7.2" fill="#151515" stroke="#151515" stroke-width="0.18" text-anchor="middle">11 Jul</text>
<text x="640" y="447.1" font-size="7.2" fill="#151515" stroke="#151515" stroke-width="0.18" text-anchor="middle">15 Jul</text>
<text x="673" y="447.1" font-size="7.2" fill="#151515" stroke="#151515" stroke-width="0.18" text-anchor="middle">19 Jul</text>
<text x="707" y="447.1" font-size="7.2" fill="#151515" stroke="#151515" stroke-width="0.18" text-anchor="middle">23 Jul</text>
<text x="740" y="447.1" font-size="7.2" fill="#151515" stroke="#151515" stroke-width="0.18" text-anchor="middle">27 Jul</text>
<text x="773" y="447.1" font-size="7.2" fill="#151515" stroke="#151515" stroke-width="0.18" text-anchor="middle">31 Jul</text>
<path d="M743.2 417 C743 414.5 745 413.5 746.5 414 C747.5 412.5 749.5 412.5 750.3 413.8 C751.5 412.6 753.5 412.8 754 414.2 C756 413.8 757 415.5 756.3 417.5 C756.5 419.5 755 420.8 754 421.5 C754.5 423.5 753.8 425 753 425.8 C752.8 427.5 751 428.2 749.7 427.8 C748.3 428.2 746.8 427.5 746.5 426 C745.5 425 745.2 423.3 745.8 421.8 C744.3 420.8 743 419 743.2 417Z" fill="#d2d2d2"/>
<text x="759.8" y="423.6" font-size="11.2" font-weight="bold" fill="#d2d2d2" textLength="44.5" lengthAdjust="spacingAndGlyphs">coinglass</text>
<rect x="432.2" y="448.5" width="374.1" height="37.5" fill="#e8eafa"/>
<path d="M58.1 468.5 L64.7 469.2 L72.0 468.5 L81.7 468.0 L89.1 469.2 L98.8 468.5 L108.6 469.0 L123.3 468.5 L136.7 469.2 L141.6 472.4 L147.7 474.1 L153.8 476.5 L157.4 474.8 L162.3 473.3 L165.3 469.9 L168.4 473.3 L172.1 475.3 L178.2 470.9 L184.3 472.4 L191.6 474.8 L197.7 477.3 L203.8 475.3 L211.2 476.0 L220.9 475.3 L230.7 475.8 L240.5 474.8 L250.2 474.8 L254.9 473.3 L269.5 473.3 L272.0 475.3 L281.7 476.0 L289.1 474.6 L298.8 475.8 L308.6 475.3 L312.3 478.2 L317.2 477.3 L322.0 478.2 L324.5 475.8 L330.6 475.3 L336.7 473.8 L342.8 475.3 L352.6 474.8 L362.3 474.3 L369.7 474.3 L373.3 472.4 L377.0 470.4 L386.7 469.4 L396.5 469.9 L406.3 469.2 L416.0 468.7 L425.8 469.2 L433.1 468.5 L442.9 466.0 L450.2 465.0 L459.8 465.0 L474.4 465.5 L481.7 466.0 L485.4 464.3 L489.1 465.0 L496.4 462.6 L501.3 461.6 L508.6 463.1 L518.4 462.4 L528.1 463.6 L537.9 465.0 L547.7 464.3 L559.9 465.0 L572.1 464.1 L577.0 462.6 L584.3 462.6 L591.6 464.3 L601.4 464.1 L606.3 463.6 L611.2 464.6 L620.9 465.0 L630.7 466.8 L635.6 465.0 L645.3 463.6 L650.0 463.1 L664.7 463.1 L668.3 464.1 L674.4 461.9 L681.7 462.6 L691.5 462.6 L701.3 462.1 L708.6 458.7 L718.4 457.7 L720.8 456.7 L724.5 458.7 L733.0 458.2 L747.7 458.2 L759.9 458.2 L767.2 458.7 L777.0 458.2 L791.6 458.2 L799.0 460.2 L803.8 461.1 L806.3 461.6 L806.3 486 L58 486 Z" fill="#e4e8f5" clip-path="url(#unsel)"/>
<path d="M58.1 468.5 L64.7 469.2 L72.0 468.5 L81.7 468.0 L89.1 469.2 L98.8 468.5 L108.6 469.0 L123.3 468.5 L136.7 469.2 L141.6 472.4 L147.7 474.1 L153.8 476.5 L157.4 474.8 L162.3 473.3 L165.3 469.9 L168.4 473.3 L172.1 475.3 L178.2 470.9 L184.3 472.4 L191.6 474.8 L197.7 477.3 L203.8 475.3 L211.2 476.0 L220.9 475.3 L230.7 475.8 L240.5 474.8 L250.2 474.8 L254.9 473.3 L269.5 473.3 L272.0 475.3 L281.7 476.0 L289.1 474.6 L298.8 475.8 L308.6 475.3 L312.3 478.2 L317.2 477.3 L322.0 478.2 L324.5 475.8 L330.6 475.3 L336.7 473.8 L342.8 475.3 L352.6 474.8 L362.3 474.3 L369.7 474.3 L373.3 472.4 L377.0 470.4 L386.7 469.4 L396.5 469.9 L406.3 469.2 L416.0 468.7 L425.8 469.2 L433.1 468.5 L442.9 466.0 L450.2 465.0 L459.8 465.0 L474.4 465.5 L481.7 466.0 L485.4 464.3 L489.1 465.0 L496.4 462.6 L501.3 461.6 L508.6 463.1 L518.4 462.4 L528.1 463.6 L537.9 465.0 L547.7 464.3 L559.9 465.0 L572.1 464.1 L577.0 462.6 L584.3 462.6 L591.6 464.3 L601.4 464.1 L606.3 463.6 L611.2 464.6 L620.9 465.0 L630.7 466.8 L635.6 465.0 L645.3 463.6 L650.0 463.1 L664.7 463.1 L668.3 464.1 L674.4 461.9 L681.7 462.6 L691.5 462.6 L701.3 462.1 L708.6 458.7 L718.4 457.7 L720.8 456.7 L724.5 458.7 L733.0 458.2 L747.7 458.2 L759.9 458.2 L767.2 458.7 L777.0 458.2 L791.6 458.2 L799.0 460.2 L803.8 461.1 L806.3 461.6 L806.3 486 L58 486 Z" fill="#d9def7" clip-path="url(#sel)"/>
<path d="M58.1 468.5 L64.7 469.2 L72.0 468.5 L81.7 468.0 L89.1 469.2 L98.8 468.5 L108.6 469.0 L123.3 468.5 L136.7 469.2 L141.6 472.4 L147.7 474.1 L153.8 476.5 L157.4 474.8 L162.3 473.3 L165.3 469.9 L168.4 473.3 L172.1 475.3 L178.2 470.9 L184.3 472.4 L191.6 474.8 L197.7 477.3 L203.8 475.3 L211.2 476.0 L220.9 475.3 L230.7 475.8 L240.5 474.8 L250.2 474.8 L254.9 473.3 L269.5 473.3 L272.0 475.3 L281.7 476.0 L289.1 474.6 L298.8 475.8 L308.6 475.3 L312.3 478.2 L317.2 477.3 L322.0 478.2 L324.5 475.8 L330.6 475.3 L336.7 473.8 L342.8 475.3 L352.6 474.8 L362.3 474.3 L369.7 474.3 L373.3 472.4 L377.0 470.4 L386.7 469.4 L396.5 469.9 L406.3 469.2 L416.0 468.7 L425.8 469.2 L433.1 468.5 L442.9 466.0 L450.2 465.0 L459.8 465.0 L474.4 465.5 L481.7 466.0 L485.4 464.3 L489.1 465.0 L496.4 462.6 L501.3 461.6 L508.6 463.1 L518.4 462.4 L528.1 463.6 L537.9 465.0 L547.7 464.3 L559.9 465.0 L572.1 464.1 L577.0 462.6 L584.3 462.6 L591.6 464.3 L601.4 464.1 L606.3 463.6 L611.2 464.6 L620.9 465.0 L630.7 466.8 L635.6 465.0 L645.3 463.6 L650.0 463.1 L664.7 463.1 L668.3 464.1 L674.4 461.9 L681.7 462.6 L691.5 462.6 L701.3 462.1 L708.6 458.7 L718.4 457.7 L720.8 456.7 L724.5 458.7 L733.0 458.2 L747.7 458.2 L759.9 458.2 L767.2 458.7 L777.0 458.2 L791.6 458.2 L799.0 460.2 L803.8 461.1 L806.3 461.6" fill="none" stroke="#aab5e2" stroke-width="0.7"/>
<rect x="428.5" y="463.3" width="9" height="10.2" rx="2.6" fill="#2b3350"/><path d="M432.1 466.3v4.2M433.9 466.3v4.2" stroke="#9aa3c4" stroke-width="0.7"/>
<rect x="801.8" y="463.3" width="9" height="10.2" rx="2.6" fill="#2b3350"/><path d="M805.4 466.3v4.2M807.2 466.3v4.2" stroke="#9aa3c4" stroke-width="0.7"/>
</svg>
<div class="abs" style="left:560px;top:255.5px;width:165px;height:22.5px;background:#f0f1f4;border-radius:4px"></div>
<div class="abs" style="left:562px;top:257.2px;width:70px;height:19px;background:#fff;border-radius:3px;box-shadow:0 0 2px rgba(0,0,0,0.08)"></div>
<div class="abs ctl" style="left:571.6px;top:261.7px;font-size:8.9px">OI-Weighted</div>
<div class="abs ctl" style="left:643px;top:261.7px;font-size:8.9px">Volume-Weighted</div>
<div class="abs" style="left:735px;top:255px;width:62.5px;height:23px;background:#eff0f4;border-radius:3px"></div>
<div class="abs ctl" style="left:743.6px;top:261.7px">BTC</div>
<svg class="abs" style="left:783.3px;top:264.8px" width="5.4" height="3.6" viewBox="0 0 6 4"><path d="M0.6 0.6h4.8L3 3.4z" fill="#666"/></svg>
<div class="abs" style="left:807px;top:255px;width:48px;height:23px;background:#eff0f4;border-radius:3px"></div>
<div class="abs ctl" style="left:813px;top:261.7px;font-size:8.65px">8 hour</div>
<svg class="abs" style="left:842px;top:261.5px" width="6" height="10" viewBox="0 0 6 10"><path d="M1 3.6L3 1.4L5 3.6M1 6.4L3 8.6L5 6.4" fill="none" stroke="#555" stroke-width="0.8"/></svg>
<!--/CHART-->

</div>
</body>
</html>
